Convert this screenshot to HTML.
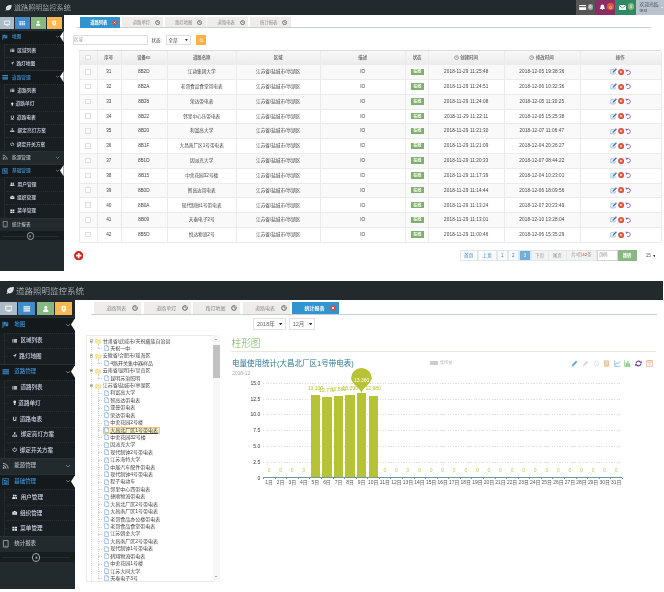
<!DOCTYPE html>
<html lang="zh-CN"><head><meta charset="utf-8"><title>道路照明监控系统</title>
<style>
html,body{margin:0;padding:0;background:#fff;}
div{box-sizing:border-box;}
body{width:664px;height:592px;position:relative;overflow:hidden;font-family:"Liberation Sans","Noto Sans CJK SC",sans-serif;color:#393939;}
.abs,.abs *{position:absolute;box-sizing:border-box;white-space:nowrap;}
.t{position:absolute;white-space:nowrap;}
#wrap{position:absolute;left:0;top:0;width:664px;height:592px;will-change:transform;}
</style></head>
<body>
<div id="wrap">
<div id="shot1"><div class="" style="position:absolute;left:0.00px;top:0.00px;width:664.00px;height:271.50px;background:#fff;"></div><div class="" style="position:absolute;left:0.00px;top:0.00px;width:664.00px;height:15.40px;background:#222a2d;"></div><svg style="position:absolute;left:5.00px;top:4.20px" width="7.00" height="7.00" viewBox="0 0 16 16"><path d="M15 2C9 2 3 3 2 9c-.3 1.6.2 2.8.8 3.6L1 14.5l1 1 2-2c1 .6 2.4.9 4 .5 6-1.4 7-7 7-12zM5 11c2-3 4-4.500 7-5.500C9 7 7 8.500 5 11z" fill="#dfe3e5"/></svg><div class="t" style="left:14.00px;top:4px;font-size:7.1px;line-height:9.94px;color:#d0d4d6;font-weight:300;">道路照明监控系统</div><div class="" style="position:absolute;left:576.20px;top:0.00px;width:19.00px;height:15.40px;background:#555;"></div><div class="" style="position:absolute;left:595.20px;top:0.00px;width:20.20px;height:15.40px;background:#892e65;"></div><div class="" style="position:absolute;left:615.40px;top:0.00px;width:20.40px;height:15.40px;background:#2e8965;"></div><div class="" style="position:absolute;left:635.80px;top:0.00px;width:28.20px;height:15.40px;background:#b9c3cf;"></div><svg style="position:absolute;left:579.30px;top:5.00px" width="7.30" height="5.20" viewBox="0 0 16 12"><path d="M0 0h16v12H0z" fill="#fff"/><path d="M0 2.500h16v2.600H0z" fill="#555"/></svg><div class="" style="position:absolute;left:587.50px;top:3.50px;width:5.80px;height:6.60px;background:#a8a8a8;border-radius:2.9px;"></div><div class="t" style="left:590.40px;top:5px;font-size:3.8px;line-height:5.32px;color:#fff;transform:translateX(-50%);">0</div><svg style="position:absolute;left:598.80px;top:4.20px" width="6.80" height="6.60" viewBox="0 0 16 16"><path d="M8 1c-3 0-4.500 2.500-4.500 5.500S2.500 11 1 12h14c-1.500-1-2.500-2.500-2.500-5.500S11 1 8 1zM6.200 13h3.600a1.800 1.800 0 0 1-3.600 0z" fill="#fff"/></svg><div class="" style="position:absolute;left:607.30px;top:3.20px;width:6.70px;height:7.30px;background:#d85b43;border-radius:3.3px;"></div><div class="t" style="left:610.70px;top:5px;font-size:3.9px;line-height:5.46px;color:#ffe;transform:translateX(-50%);">0</div><svg style="position:absolute;left:619.00px;top:5.10px" width="7.00" height="5.30" viewBox="0 0 16 12"><path d="M0 0h16v12H0z" fill="#fff"/><path d="M0 0.500l8 6.500 8-6.500" fill="none" stroke="#2e8965" stroke-width="1.600"/></svg><div class="" style="position:absolute;left:627.80px;top:3.40px;width:6.30px;height:6.90px;background:#8abb7c;border-radius:3.1px;"></div><div class="t" style="left:631.00px;top:5px;font-size:3.8px;line-height:5.32px;color:#fff;transform:translateX(-50%);">0</div><div class="t" style="left:639.50px;top:2px;font-size:4.7px;line-height:6.58px;color:#4a5560;">欢迎光临,</div><div class="t" style="left:639.50px;top:8px;font-size:4.7px;line-height:6.58px;color:#4a5560;">test</div><div style="position:absolute;left:660.9px;top:6.5px;width:0;height:0;border-left:1.6px solid transparent;border-right:1.6px solid transparent;border-top:1.8px solid #fff"></div><div class="" style="position:absolute;left:0.00px;top:15.40px;width:64.00px;height:256.10px;background:#222a2d;"></div><div class="" style="position:absolute;left:-1.00px;top:17.10px;width:14.75px;height:11.70px;background:#adbbc6;"></div><svg style="position:absolute;left:3.57px;top:19.75px" width="6.40" height="6.40" viewBox="0 0 16 16"><path d="M1.500 2.500h13v8.500h-13z" fill="none" stroke="#fff" stroke-width="2"/><path d="M5 13h6v1.500H5z" fill="#fff"/></svg><div class="" style="position:absolute;left:15.00px;top:17.10px;width:14.75px;height:11.70px;background:#428bca;"></div><svg style="position:absolute;left:19.18px;top:19.75px" width="6.40" height="6.40" viewBox="0 0 16 16"><path d="M1 3h4v2.800H1zM6 3h4v2.800H6zM11 3h4v2.800h-4zM1 6.800h4v2.800H1zM6 6.800h4v2.800H6zM11 6.800h4v2.800h-4zM1 10.600h4v2.800H1zM6 10.600h4v2.800H6zM11 10.600h4v2.800h-4z" fill="#fff"/></svg><div class="" style="position:absolute;left:31.00px;top:17.10px;width:14.75px;height:11.70px;background:#87b87f;"></div><svg style="position:absolute;left:35.17px;top:19.75px" width="6.40" height="6.40" viewBox="0 0 16 16"><circle cx="8" cy="5" r="3.200" fill="#fff"/><path d="M2.500 14.500c0-4 2-6 5.500-6s5.500 2 5.500 6z" fill="#fff"/></svg><div class="" style="position:absolute;left:47.00px;top:17.10px;width:14.75px;height:11.70px;background:#ffb752;"></div><svg style="position:absolute;left:51.17px;top:19.75px" width="6.40" height="6.40" viewBox="0 0 16 16"><path d="M3.500 2h9v7c0 3-2 4.500-4.500 5.500C5.500 13.500 3.500 12 3.500 9z" fill="#fff"/><path d="M6.500 4.500h3v5h-3z" fill="#ffb752"/></svg><div class="" style="position:absolute;left:0.00px;top:30.20px;width:64.00px;height:13.39px;background:#141a1b;border-top:0.35px solid #283135;"></div><svg style="position:absolute;left:1.60px;top:33.69px" width="6.40" height="6.40" viewBox="0 0 16 16"><path d="M2 1.500v13.500" stroke="#3f8fd2" stroke-width="1.800"/><path d="M4 3c3-1.500 5 1.500 8.500 0v7c-3.500 1.500-5.500-1.500-8.500 0z" fill="#3f8fd2" fill-opacity="0.450" stroke="#3f8fd2" stroke-width="1.300"/><path d="M4 3c1.500-.700 2.800-.400 4.200 0v3.300c-1.400-.400-2.700-.700-4.200 0zM8.200 6.300c1.400.400 2.700.700 4.300 0v3.700c-1.600.700-2.900.400-4.300 0z" fill="#3f8fd2"/></svg><div class="t" style="left:12.10px;top:34px;font-size:4.63px;line-height:6.49px;color:#3f8fd2;font-weight:500;">地图</div><svg style="position:absolute;left:55.00px;top:34.29px" width="5.20" height="5.20" viewBox="0 0 16 16"><path d="M3 5.500l5 5 5-5" fill="none" stroke="#8a949a" stroke-width="2"/></svg><svg style="position:absolute;left:59.40px;top:30.29px" width="4.60" height="13.20"><path d="M4.60 1L1 6.60L4.60 12.20z" fill="#fff"/></svg><div class="" style="position:absolute;left:0.00px;top:43.59px;width:64.00px;height:13.39px;background:#181e21;"></div><div class="" style="position:absolute;left:6.00px;top:43.59px;width:58.00px;height:0.00px;border-top:0.35px dotted #273034;"></div><div class="" style="position:absolute;left:3.70px;top:43.59px;width:0.00px;height:13.39px;border-left:0.35px solid #232b2f;"></div><div class="" style="position:absolute;left:3.70px;top:50.29px;width:2.60px;height:0.00px;border-top:0.35px solid #232b2f;"></div><svg style="position:absolute;left:10.00px;top:47.99px" width="4.60" height="4.60" viewBox="0 0 16 16"><path d="M1 3h3v2.500H1zM5.500 3H15v2.500H5.500zM1 6.800h3v2.500H1zM5.500 6.800H15v2.500H5.500zM1 10.600h3v2.500H1zM5.500 10.600H15v2.500H5.500z" fill="#dfe4ee"/></svg><div class="t" style="left:17.30px;top:48px;font-size:4.73px;line-height:6.62px;color:#cdd4e4;font-weight:500;">区域列表</div><div class="" style="position:absolute;left:0.00px;top:56.98px;width:64.00px;height:13.39px;background:#181e21;"></div><div class="" style="position:absolute;left:6.00px;top:56.98px;width:58.00px;height:0.00px;border-top:0.35px dotted #273034;"></div><div class="" style="position:absolute;left:3.70px;top:56.98px;width:0.00px;height:13.39px;border-left:0.35px solid #232b2f;"></div><div class="" style="position:absolute;left:3.70px;top:63.68px;width:2.60px;height:0.00px;border-top:0.35px solid #232b2f;"></div><svg style="position:absolute;left:10.00px;top:61.38px" width="4.60" height="4.60" viewBox="0 0 16 16"><path d="M14 2L2 8h6v6z" fill="#dfe4ee"/></svg><div class="t" style="left:16.40px;top:61px;font-size:4.73px;line-height:6.62px;color:#cdd4e4;font-weight:500;">路灯地图</div><div class="" style="position:absolute;left:0.00px;top:70.37px;width:64.00px;height:13.39px;background:#141a1b;border-top:0.35px solid #283135;"></div><svg style="position:absolute;left:1.60px;top:73.86px" width="6.40" height="6.40" viewBox="0 0 16 16"><path d="M1 2.500h14v2.600H1zM1 6.700h14v2.600H1zM1 10.900h14v2.600H1z" fill="#3f8fd2"/></svg><div class="t" style="left:12.10px;top:75px;font-size:4.63px;line-height:6.49px;color:#3f8fd2;font-weight:500;">道路管理</div><svg style="position:absolute;left:55.00px;top:74.47px" width="5.20" height="5.20" viewBox="0 0 16 16"><path d="M3 5.500l5 5 5-5" fill="none" stroke="#8a949a" stroke-width="2"/></svg><svg style="position:absolute;left:59.40px;top:70.47px" width="4.60" height="13.20"><path d="M4.60 1L1 6.60L4.60 12.20z" fill="#fff"/></svg><div class="" style="position:absolute;left:0.00px;top:83.76px;width:64.00px;height:13.39px;background:#181e21;"></div><div class="" style="position:absolute;left:6.00px;top:83.76px;width:58.00px;height:0.00px;border-top:0.35px dotted #273034;"></div><div class="" style="position:absolute;left:3.70px;top:83.76px;width:0.00px;height:13.39px;border-left:0.35px solid #232b2f;"></div><div class="" style="position:absolute;left:3.70px;top:90.46px;width:2.60px;height:0.00px;border-top:0.35px solid #232b2f;"></div><svg style="position:absolute;left:10.00px;top:88.16px" width="4.60" height="4.60" viewBox="0 0 16 16"><path d="M1 3h3v2.500H1zM5.500 3H15v2.500H5.500zM1 6.800h3v2.500H1zM5.500 6.800H15v2.500H5.500zM1 10.600h3v2.500H1zM5.500 10.600H15v2.500H5.500z" fill="#dfe4ee"/></svg><div class="t" style="left:17.30px;top:88px;font-size:4.73px;line-height:6.62px;color:#cdd4e4;font-weight:500;">道路列表</div><div class="" style="position:absolute;left:0.00px;top:97.15px;width:64.00px;height:13.39px;background:#181e21;"></div><div class="" style="position:absolute;left:6.00px;top:97.15px;width:58.00px;height:0.00px;border-top:0.35px dotted #273034;"></div><div class="" style="position:absolute;left:3.70px;top:97.15px;width:0.00px;height:13.39px;border-left:0.35px solid #232b2f;"></div><div class="" style="position:absolute;left:3.70px;top:103.84px;width:2.60px;height:0.00px;border-top:0.35px solid #232b2f;"></div><svg style="position:absolute;left:10.00px;top:101.55px" width="4.60" height="4.60" viewBox="0 0 16 16"><path d="M8 1.500a4 4 0 0 0-2.300 7.300V11h4.600V8.800A4 4 0 0 0 8 1.500zM6 12h4v2.500H6z" fill="#dfe4ee"/></svg><div class="t" style="left:15.60px;top:101px;font-size:4.73px;line-height:6.62px;color:#cdd4e4;font-weight:500;">道路单灯</div><div class="" style="position:absolute;left:0.00px;top:110.54px;width:64.00px;height:13.39px;background:#181e21;"></div><div class="" style="position:absolute;left:6.00px;top:110.54px;width:58.00px;height:0.00px;border-top:0.35px dotted #273034;"></div><div class="" style="position:absolute;left:3.70px;top:110.54px;width:0.00px;height:13.39px;border-left:0.35px solid #232b2f;"></div><div class="" style="position:absolute;left:3.70px;top:117.24px;width:2.60px;height:0.00px;border-top:0.35px solid #232b2f;"></div><svg style="position:absolute;left:10.00px;top:114.94px" width="4.60" height="4.60" viewBox="0 0 16 16"><path d="M3 2v7a5 5 0 0 0 10 0V2h-2.500v7a2.500 2.500 0 0 1-5 0V2zM2 14h12v1.500H2z" fill="#dfe4ee"/></svg><div class="t" style="left:16.80px;top:115px;font-size:4.73px;line-height:6.62px;color:#cdd4e4;font-weight:500;">道路电表</div><div class="" style="position:absolute;left:0.00px;top:123.93px;width:64.00px;height:13.39px;background:#181e21;"></div><div class="" style="position:absolute;left:6.00px;top:123.93px;width:58.00px;height:0.00px;border-top:0.35px dotted #273034;"></div><div class="" style="position:absolute;left:3.70px;top:123.93px;width:0.00px;height:13.39px;border-left:0.35px solid #232b2f;"></div><div class="" style="position:absolute;left:3.70px;top:130.62px;width:2.60px;height:0.00px;border-top:0.35px solid #232b2f;"></div><svg style="position:absolute;left:10.00px;top:128.32px" width="4.60" height="4.60" viewBox="0 0 16 16"><path d="M6 1h4v4H6zM1 10h4v4H1zM6 10h4v4H6zM11 10h4v4h-4zM7.500 5h1v3h-1zM3 7.500h10v1H3zM2.500 8h1v2h-1zM12.500 8h1v2h-1z" fill="#dfe4ee"/></svg><div class="t" style="left:17.60px;top:128px;font-size:4.73px;line-height:6.62px;color:#cdd4e4;font-weight:500;">绑定亮灯方案</div><div class="" style="position:absolute;left:0.00px;top:137.32px;width:64.00px;height:13.39px;background:#181e21;"></div><div class="" style="position:absolute;left:6.00px;top:137.32px;width:58.00px;height:0.00px;border-top:0.35px dotted #273034;"></div><div class="" style="position:absolute;left:3.70px;top:137.32px;width:0.00px;height:13.39px;border-left:0.35px solid #232b2f;"></div><div class="" style="position:absolute;left:3.70px;top:144.01px;width:2.60px;height:0.00px;border-top:0.35px solid #232b2f;"></div><svg style="position:absolute;left:10.00px;top:141.71px" width="4.60" height="4.60" viewBox="0 0 16 16"><path d="M8 1v6" stroke="#dfe4ee" stroke-width="2.200" fill="none"/><path d="M4.500 3.500a5.500 5.500 0 1 0 7 0" stroke="#dfe4ee" stroke-width="2.200" fill="none"/></svg><div class="t" style="left:16.80px;top:142px;font-size:4.73px;line-height:6.62px;color:#cdd4e4;font-weight:500;">绑定开关方案</div><div class="" style="position:absolute;left:0.00px;top:150.71px;width:64.00px;height:13.39px;background:#222a2d;border-top:0.35px solid #283135;"></div><svg style="position:absolute;left:1.60px;top:154.21px" width="6.40" height="6.40" viewBox="0 0 16 16"><circle cx="3.500" cy="12.500" r="1.800" fill="#b1bac1"/><path d="M2 7.500a6.500 6.500 0 0 1 6.500 6.500M2 3a11 11 0 0 1 11 11" stroke="#b1bac1" stroke-width="2" fill="none"/></svg><div class="t" style="left:12.10px;top:155px;font-size:4.63px;line-height:6.49px;color:#b1bac1;font-weight:500;">能源管理</div><svg style="position:absolute;left:55.00px;top:154.81px" width="5.20" height="5.20" viewBox="0 0 16 16"><path d="M3 5.500l5 5 5-5" fill="none" stroke="#8a949a" stroke-width="2"/></svg><div class="" style="position:absolute;left:0.00px;top:164.10px;width:64.00px;height:13.39px;background:#141a1b;border-top:0.35px solid #283135;"></div><svg style="position:absolute;left:1.60px;top:167.59px" width="6.40" height="6.40" viewBox="0 0 16 16"><path d="M1.500 1.500h13v13h-13z" fill="none" stroke="#3f8fd2" stroke-width="1.600"/><path d="M4 4h3.500v3.500H4zM8.500 4H12v1.500H8.500zM8.500 6.500H12V8H8.500zM4 9h8v1.300H4zM4 11.200h8v1.300H4z" fill="#3f8fd2"/></svg><div class="t" style="left:12.10px;top:168px;font-size:4.63px;line-height:6.49px;color:#3f8fd2;font-weight:500;">基础管理</div><svg style="position:absolute;left:55.00px;top:168.19px" width="5.20" height="5.20" viewBox="0 0 16 16"><path d="M3 5.500l5 5 5-5" fill="none" stroke="#8a949a" stroke-width="2"/></svg><svg style="position:absolute;left:59.40px;top:164.19px" width="4.60" height="13.20"><path d="M4.60 1L1 6.60L4.60 12.20z" fill="#fff"/></svg><div class="" style="position:absolute;left:0.00px;top:177.49px;width:64.00px;height:13.39px;background:#181e21;"></div><div class="" style="position:absolute;left:6.00px;top:177.49px;width:58.00px;height:0.00px;border-top:0.35px dotted #273034;"></div><div class="" style="position:absolute;left:3.70px;top:177.49px;width:0.00px;height:13.39px;border-left:0.35px solid #232b2f;"></div><div class="" style="position:absolute;left:3.70px;top:184.19px;width:2.60px;height:0.00px;border-top:0.35px solid #232b2f;"></div><svg style="position:absolute;left:10.00px;top:181.88px" width="4.60" height="4.60" viewBox="0 0 16 16"><circle cx="5.300" cy="4.600" r="2.800" fill="#dfe4ee"/><circle cx="11.300" cy="4.600" r="2.600" fill="#dfe4ee"/><path d="M0.500 14.500c0-4.500 1.500-6.500 4.800-6.500s4.800 2 4.800 6.500zM11 8c3 0 4.500 1.800 4.500 6.500h-4.200c0-2.800-.400-5-1.800-6.100.400-.300.900-.400 1.500-.400z" fill="#dfe4ee"/></svg><div class="t" style="left:17.60px;top:182px;font-size:4.73px;line-height:6.62px;color:#cdd4e4;font-weight:500;">用户管理</div><div class="" style="position:absolute;left:0.00px;top:190.88px;width:64.00px;height:13.39px;background:#181e21;"></div><div class="" style="position:absolute;left:6.00px;top:190.88px;width:58.00px;height:0.00px;border-top:0.35px dotted #273034;"></div><div class="" style="position:absolute;left:3.70px;top:190.88px;width:0.00px;height:13.39px;border-left:0.35px solid #232b2f;"></div><div class="" style="position:absolute;left:3.70px;top:197.57px;width:2.60px;height:0.00px;border-top:0.35px solid #232b2f;"></div><svg style="position:absolute;left:10.00px;top:195.27px" width="4.60" height="4.60" viewBox="0 0 16 16"><path d="M1 5h14v9H1zM5 3h6v2H5z" fill="#dfe4ee"/><path d="M5 8h6v1.500H5z" fill="#181e21"/></svg><div class="t" style="left:17.00px;top:195px;font-size:4.73px;line-height:6.62px;color:#cdd4e4;font-weight:500;">组织管理</div><div class="" style="position:absolute;left:0.00px;top:204.27px;width:64.00px;height:13.39px;background:#181e21;"></div><div class="" style="position:absolute;left:6.00px;top:204.27px;width:58.00px;height:0.00px;border-top:0.35px dotted #273034;"></div><div class="" style="position:absolute;left:3.70px;top:204.27px;width:0.00px;height:13.39px;border-left:0.35px solid #232b2f;"></div><div class="" style="position:absolute;left:3.70px;top:210.96px;width:2.60px;height:0.00px;border-top:0.35px solid #232b2f;"></div><svg style="position:absolute;left:10.00px;top:208.66px" width="4.60" height="4.60" viewBox="0 0 16 16"><path d="M1 2h6.300v5.300H1zM8.700 2H15v5.300H8.700zM1 8.700h6.300V14H1zM8.700 8.700H15V14H8.700z" fill="#dfe4ee"/></svg><div class="t" style="left:17.20px;top:208px;font-size:4.73px;line-height:6.62px;color:#cdd4e4;font-weight:500;">菜单管理</div><div class="" style="position:absolute;left:0.00px;top:217.66px;width:64.00px;height:13.39px;background:#222a2d;border-top:0.35px solid #283135;"></div><svg style="position:absolute;left:1.60px;top:221.16px" width="6.40" height="6.40" viewBox="0 0 16 16"><path d="M3 1h10v14H3z" fill="none" stroke="#b1bac1" stroke-width="1.600"/><path d="M6.500 12h3v1.200h-3z" fill="#b1bac1"/></svg><div class="t" style="left:12.10px;top:222px;font-size:4.63px;line-height:6.49px;color:#b1bac1;font-weight:500;">统计报表</div><div class="" style="position:absolute;left:0.00px;top:231.05px;width:64.00px;height:8.60px;background:#171c1e;"></div><div class="" style="position:absolute;left:2.00px;top:235.95px;width:57.00px;height:0.00px;border-top:0.4px solid #262e31;"></div><div class="" style="position:absolute;left:26.70px;top:232.35px;width:7.40px;height:7.40px;background:#171c1e;border:0.6px solid #a4aaad;border-radius:50%;"></div><svg style="position:absolute;left:28.20px;top:233.85px" width="4.40" height="4.40" viewBox="0 0 16 16"><path d="M10 3L5 8l5 5z" fill="#a4aaad"/><path d="M5.500 3.500v9" stroke="#a4aaad" stroke-width="1.400"/></svg><div class="" style="position:absolute;left:77.40px;top:27.30px;width:574.00px;height:0.00px;border-top:0.55px solid #c5d0dc;"></div><div class="" style="position:absolute;left:80.00px;top:17.40px;width:40.30px;height:10.30px;background:#3095cf;"></div><div class="t" style="left:98.80px;top:20px;font-size:4.3px;line-height:6.02px;color:#fff;transform:translateX(-50%);font-weight:bold;">道路列表</div><svg style="position:absolute;left:112.10px;top:20.00px" width="5.20" height="5.20" viewBox="0 0 16 16"><circle cx="8" cy="8" r="7.500" fill="#d5493b"/><path d="M5 5l6 6M11 5l-6 6" stroke="#fff" stroke-width="2.200"/></svg><div class="" style="position:absolute;left:122.20px;top:17.40px;width:41.00px;height:9.90px;background:#f0ecec;"></div><div class="t" style="left:141.40px;top:20px;font-size:4.3px;line-height:6.02px;color:#8a8a8a;transform:translateX(-50%);">道路单灯</div><svg style="position:absolute;left:154.80px;top:19.90px" width="5.20" height="5.20" viewBox="0 0 16 16"><circle cx="8" cy="8" r="6.200" fill="none" stroke="#555" stroke-width="2.400"/><path d="M8 8L12.500 3" stroke="#f0ecec" stroke-width="2"/><path d="M8 3v5h4" stroke="#555" stroke-width="1.500" fill="none"/></svg><div class="" style="position:absolute;left:164.60px;top:17.40px;width:41.00px;height:9.90px;background:#f0ecec;"></div><div class="t" style="left:183.80px;top:20px;font-size:4.3px;line-height:6.02px;color:#8a8a8a;transform:translateX(-50%);">路灯地图</div><svg style="position:absolute;left:197.20px;top:19.90px" width="5.20" height="5.20" viewBox="0 0 16 16"><circle cx="8" cy="8" r="6.200" fill="none" stroke="#555" stroke-width="2.400"/><path d="M8 8L12.500 3" stroke="#f0ecec" stroke-width="2"/><path d="M8 3v5h4" stroke="#555" stroke-width="1.500" fill="none"/></svg><div class="" style="position:absolute;left:207.00px;top:17.40px;width:41.00px;height:9.90px;background:#f0ecec;"></div><div class="t" style="left:226.20px;top:20px;font-size:4.3px;line-height:6.02px;color:#8a8a8a;transform:translateX(-50%);">道路电表</div><svg style="position:absolute;left:239.60px;top:19.90px" width="5.20" height="5.20" viewBox="0 0 16 16"><circle cx="8" cy="8" r="6.200" fill="none" stroke="#555" stroke-width="2.400"/><path d="M8 8L12.500 3" stroke="#f0ecec" stroke-width="2"/><path d="M8 3v5h4" stroke="#555" stroke-width="1.500" fill="none"/></svg><div class="" style="position:absolute;left:249.50px;top:17.40px;width:41.00px;height:9.90px;background:#f0ecec;"></div><div class="t" style="left:268.70px;top:20px;font-size:4.3px;line-height:6.02px;color:#8a8a8a;transform:translateX(-50%);">统计报表</div><svg style="position:absolute;left:282.10px;top:19.90px" width="5.20" height="5.20" viewBox="0 0 16 16"><circle cx="8" cy="8" r="6.200" fill="none" stroke="#555" stroke-width="2.400"/><path d="M8 8L12.500 3" stroke="#f0ecec" stroke-width="2"/><path d="M8 3v5h4" stroke="#555" stroke-width="1.500" fill="none"/></svg><div class="" style="position:absolute;left:73.00px;top:35.20px;width:74.50px;height:10.00px;border:0.4px solid #dedede;background:#fff;"></div><div class="t" style="left:74.20px;top:37px;font-size:4.3px;line-height:6.02px;color:#999;">区域</div><div class="t" style="left:151.50px;top:38px;font-size:4.5px;line-height:6.3px;color:#393939;">状态:</div><div class="" style="position:absolute;left:166.20px;top:35.20px;width:25.00px;height:10.00px;border:0.4px solid #dedede;background:#fff;"></div><div class="t" style="left:168.50px;top:38px;font-size:4.5px;line-height:6.3px;color:#555;">全部</div><svg style="position:absolute;left:185.3px;top:39.3px" width="2.8" height="2.4"><path d="M0 0h2.800L1.400 2.200z" fill="#333"/></svg><div class="" style="position:absolute;left:196.00px;top:35.40px;width:10.00px;height:10.00px;background:#fbb244;"></div><svg style="position:absolute;left:198.60px;top:38.00px" width="4.80" height="4.80" viewBox="0 0 16 16"><circle cx="7" cy="7" r="4.300" fill="none" stroke="#fff" stroke-width="2"/><path d="M10.500 10.500L14 14" stroke="#fff" stroke-width="2.400"/></svg><div class="" style="position:absolute;left:79.00px;top:50.50px;width:581.80px;height:13.90px;background:linear-gradient(#f8f8f8,#ececec);"></div><div class="" style="position:absolute;left:79.00px;top:64.40px;width:581.80px;height:14.80px;background:#f9f9f9;"></div><div class="" style="position:absolute;left:79.00px;top:94.00px;width:581.80px;height:14.80px;background:#f9f9f9;"></div><div class="" style="position:absolute;left:79.00px;top:123.60px;width:581.80px;height:14.80px;background:#f9f9f9;"></div><div class="" style="position:absolute;left:79.00px;top:153.20px;width:581.80px;height:14.80px;background:#f9f9f9;"></div><div class="" style="position:absolute;left:79.00px;top:182.80px;width:581.80px;height:14.80px;background:#f9f9f9;"></div><div class="" style="position:absolute;left:79.00px;top:212.40px;width:581.80px;height:14.80px;background:#f9f9f9;"></div><div class="" style="position:absolute;left:79.00px;top:64.20px;width:581.80px;height:0.00px;border-top:0.4px solid #ebebeb;"></div><div class="" style="position:absolute;left:79.00px;top:79.00px;width:581.80px;height:0.00px;border-top:0.4px solid #ebebeb;"></div><div class="" style="position:absolute;left:79.00px;top:93.80px;width:581.80px;height:0.00px;border-top:0.4px solid #ebebeb;"></div><div class="" style="position:absolute;left:79.00px;top:108.60px;width:581.80px;height:0.00px;border-top:0.4px solid #ebebeb;"></div><div class="" style="position:absolute;left:79.00px;top:123.40px;width:581.80px;height:0.00px;border-top:0.4px solid #ebebeb;"></div><div class="" style="position:absolute;left:79.00px;top:138.20px;width:581.80px;height:0.00px;border-top:0.4px solid #ebebeb;"></div><div class="" style="position:absolute;left:79.00px;top:153.00px;width:581.80px;height:0.00px;border-top:0.4px solid #ebebeb;"></div><div class="" style="position:absolute;left:79.00px;top:167.80px;width:581.80px;height:0.00px;border-top:0.4px solid #ebebeb;"></div><div class="" style="position:absolute;left:79.00px;top:182.60px;width:581.80px;height:0.00px;border-top:0.4px solid #ebebeb;"></div><div class="" style="position:absolute;left:79.00px;top:197.40px;width:581.80px;height:0.00px;border-top:0.4px solid #ebebeb;"></div><div class="" style="position:absolute;left:79.00px;top:212.20px;width:581.80px;height:0.00px;border-top:0.4px solid #ebebeb;"></div><div class="" style="position:absolute;left:79.00px;top:227.00px;width:581.80px;height:0.00px;border-top:0.4px solid #ebebeb;"></div><div class="" style="position:absolute;left:79.00px;top:241.80px;width:581.80px;height:0.00px;border-top:0.4px solid #ebebeb;"></div><div class="" style="position:absolute;left:79.00px;top:50.30px;width:581.80px;height:0.00px;border-top:0.4px solid #ddd;"></div><div class="" style="position:absolute;left:78.80px;top:50.50px;width:0.00px;height:191.50px;border-left:0.4px solid #ebebeb;"></div><div class="" style="position:absolute;left:96.55px;top:50.50px;width:0.00px;height:191.50px;border-left:0.4px solid #ebebeb;"></div><div class="" style="position:absolute;left:120.55px;top:50.50px;width:0.00px;height:191.50px;border-left:0.4px solid #ebebeb;"></div><div class="" style="position:absolute;left:166.55px;top:50.50px;width:0.00px;height:191.50px;border-left:0.4px solid #ebebeb;"></div><div class="" style="position:absolute;left:236.40px;top:50.50px;width:0.00px;height:191.50px;border-left:0.4px solid #ebebeb;"></div><div class="" style="position:absolute;left:319.60px;top:50.50px;width:0.00px;height:191.50px;border-left:0.4px solid #ebebeb;"></div><div class="" style="position:absolute;left:405.40px;top:50.50px;width:0.00px;height:191.50px;border-left:0.4px solid #ebebeb;"></div><div class="" style="position:absolute;left:428.30px;top:50.50px;width:0.00px;height:191.50px;border-left:0.4px solid #ebebeb;"></div><div class="" style="position:absolute;left:503.80px;top:50.50px;width:0.00px;height:191.50px;border-left:0.4px solid #ebebeb;"></div><div class="" style="position:absolute;left:579.50px;top:50.50px;width:0.00px;height:191.50px;border-left:0.4px solid #ebebeb;"></div><div class="" style="position:absolute;left:660.60px;top:50.50px;width:0.00px;height:191.50px;border-left:0.4px solid #ebebeb;"></div><div class="" style="position:absolute;left:84.97px;top:54.55px;width:5.80px;height:5.80px;border:0.4px solid #e0e0e0;background:#fdfdfd;"></div><div class="t" style="left:108.75px;top:55px;font-size:4.4px;line-height:6.16px;color:#707070;transform:translateX(-50%);font-weight:bold;">序号</div><div class="t" style="left:143.75px;top:55px;font-size:4.4px;line-height:6.16px;color:#707070;transform:translateX(-50%);font-weight:bold;">设备ID</div><div class="t" style="left:201.68px;top:55px;font-size:4.4px;line-height:6.16px;color:#707070;transform:translateX(-50%);font-weight:bold;">道路名称</div><div class="t" style="left:278.20px;top:55px;font-size:4.4px;line-height:6.16px;color:#707070;transform:translateX(-50%);font-weight:bold;">区域</div><div class="t" style="left:362.70px;top:55px;font-size:4.4px;line-height:6.16px;color:#707070;transform:translateX(-50%);font-weight:bold;">描述</div><div class="t" style="left:417.05px;top:55px;font-size:4.4px;line-height:6.16px;color:#707070;transform:translateX(-50%);font-weight:bold;">状态</div><div class="t" style="left:469.15px;top:55px;font-size:4.4px;line-height:6.16px;color:#707070;transform:translateX(-50%);font-weight:bold;">创建时间</div><svg style="position:absolute;left:453.85px;top:54.85px" width="5.20" height="5.20" viewBox="0 0 16 16"><circle cx="8" cy="8" r="6" fill="none" stroke="#707070" stroke-width="1.800"/><path d="M8 4.500V8h3" fill="none" stroke="#707070" stroke-width="1.500"/></svg><div class="t" style="left:544.75px;top:55px;font-size:4.4px;line-height:6.16px;color:#707070;transform:translateX(-50%);font-weight:bold;">修改时间</div><svg style="position:absolute;left:529.45px;top:54.85px" width="5.20" height="5.20" viewBox="0 0 16 16"><circle cx="8" cy="8" r="6" fill="none" stroke="#707070" stroke-width="1.800"/><path d="M8 4.500V8h3" fill="none" stroke="#707070" stroke-width="1.500"/></svg><div class="t" style="left:620.25px;top:55px;font-size:4.4px;line-height:6.16px;color:#707070;transform:translateX(-50%);font-weight:bold;">操作</div><div class="" style="position:absolute;left:84.97px;top:68.90px;width:5.80px;height:5.80px;border:0.4px solid #e0e0e0;background:#fdfdfd;"></div><div class="t" style="left:108.75px;top:69px;font-size:4.65px;line-height:6.51px;color:#444;transform:translateX(-50%);">31</div><div class="t" style="left:143.75px;top:69px;font-size:4.65px;line-height:6.51px;color:#444;transform:translateX(-50%);">8B2D</div><div class="t" style="left:201.68px;top:69px;font-size:4.65px;line-height:6.51px;color:#444;transform:translateX(-50%);">江动集团大学</div><div class="t" style="left:278.20px;top:69px;font-size:4.65px;line-height:6.51px;color:#444;transform:translateX(-50%);">江苏省/盐城市/亭湖区</div><div class="t" style="left:362.70px;top:69px;font-size:4.65px;line-height:6.51px;color:#444;transform:translateX(-50%);">IO</div><div class="" style="position:absolute;left:410.80px;top:68.60px;width:13.00px;height:6.40px;background:#82af6f;"></div><div class="t" style="left:417.30px;top:69px;font-size:4.1px;line-height:5.74px;color:#fff;transform:translateX(-50%);font-weight:bold;">在线</div><div class="t" style="left:466.25px;top:69px;font-size:4.65px;line-height:6.51px;color:#444;transform:translateX(-50%);letter-spacing:0.1px;">2018-11-29 11:25:48</div><div class="t" style="left:541.85px;top:69px;font-size:4.65px;line-height:6.51px;color:#444;transform:translateX(-50%);letter-spacing:0.1px;">2018-12-05 19:38:36</div><svg style="position:absolute;left:610.00px;top:68.40px" width="7.00" height="7.00" viewBox="0 0 16 16"><path d="M9.500 4H1.800v9.500h10V9.500" fill="none" stroke="#8db4e0" stroke-width="1.700"/><path d="M5.500 11l.8-3.200 7.200-7 2.300 2.300-7.100 7.100z" fill="#3a78c6"/></svg><svg style="position:absolute;left:618.00px;top:68.70px" width="6.20" height="6.20" viewBox="0 0 16 16"><circle cx="8" cy="8" r="7.800" fill="#d9563f"/><path d="M6 4.800v6.400L11.500 8z" fill="#fff"/></svg><svg style="position:absolute;left:625.20px;top:68.60px" width="6.40" height="6.40" viewBox="0 0 16 16"><path d="M5 4.500A5.300 5.300 0 1 1 4.500 12.800" fill="none" stroke="#8e58be" stroke-width="2.300"/><path d="M1 1.500l6.500 1.200-4 5z" fill="#8e58be"/></svg><div class="" style="position:absolute;left:84.97px;top:83.70px;width:5.80px;height:5.80px;border:0.4px solid #e0e0e0;background:#fdfdfd;"></div><div class="t" style="left:108.75px;top:84px;font-size:4.65px;line-height:6.51px;color:#444;transform:translateX(-50%);">32</div><div class="t" style="left:143.75px;top:84px;font-size:4.65px;line-height:6.51px;color:#444;transform:translateX(-50%);">8B2A</div><div class="t" style="left:201.68px;top:84px;font-size:4.65px;line-height:6.51px;color:#444;transform:translateX(-50%);">老哥食品食堂带电表</div><div class="t" style="left:278.20px;top:84px;font-size:4.65px;line-height:6.51px;color:#444;transform:translateX(-50%);">江苏省/盐城市/亭湖区</div><div class="t" style="left:362.70px;top:84px;font-size:4.65px;line-height:6.51px;color:#444;transform:translateX(-50%);">IO</div><div class="" style="position:absolute;left:410.80px;top:83.40px;width:13.00px;height:6.40px;background:#82af6f;"></div><div class="t" style="left:417.30px;top:84px;font-size:4.1px;line-height:5.74px;color:#fff;transform:translateX(-50%);font-weight:bold;">在线</div><div class="t" style="left:466.25px;top:84px;font-size:4.65px;line-height:6.51px;color:#444;transform:translateX(-50%);letter-spacing:0.1px;">2018-11-29 11:24:51</div><div class="t" style="left:541.85px;top:84px;font-size:4.65px;line-height:6.51px;color:#444;transform:translateX(-50%);letter-spacing:0.1px;">2018-12-06 10:32:36</div><svg style="position:absolute;left:610.00px;top:83.20px" width="7.00" height="7.00" viewBox="0 0 16 16"><path d="M9.500 4H1.800v9.500h10V9.500" fill="none" stroke="#8db4e0" stroke-width="1.700"/><path d="M5.500 11l.8-3.200 7.200-7 2.300 2.300-7.100 7.100z" fill="#3a78c6"/></svg><svg style="position:absolute;left:618.00px;top:83.50px" width="6.20" height="6.20" viewBox="0 0 16 16"><circle cx="8" cy="8" r="7.800" fill="#d9563f"/><path d="M6 4.800v6.400L11.500 8z" fill="#fff"/></svg><svg style="position:absolute;left:625.20px;top:83.40px" width="6.40" height="6.40" viewBox="0 0 16 16"><path d="M5 4.500A5.300 5.300 0 1 1 4.500 12.800" fill="none" stroke="#8e58be" stroke-width="2.300"/><path d="M1 1.500l6.500 1.200-4 5z" fill="#8e58be"/></svg><div class="" style="position:absolute;left:84.97px;top:98.50px;width:5.80px;height:5.80px;border:0.4px solid #e0e0e0;background:#fdfdfd;"></div><div class="t" style="left:108.75px;top:99px;font-size:4.65px;line-height:6.51px;color:#444;transform:translateX(-50%);">33</div><div class="t" style="left:143.75px;top:99px;font-size:4.65px;line-height:6.51px;color:#444;transform:translateX(-50%);">8B28</div><div class="t" style="left:201.68px;top:99px;font-size:4.65px;line-height:6.51px;color:#444;transform:translateX(-50%);">荣达带电表</div><div class="t" style="left:278.20px;top:99px;font-size:4.65px;line-height:6.51px;color:#444;transform:translateX(-50%);">江苏省/盐城市/亭湖区</div><div class="t" style="left:362.70px;top:99px;font-size:4.65px;line-height:6.51px;color:#444;transform:translateX(-50%);">IO</div><div class="" style="position:absolute;left:410.80px;top:98.20px;width:13.00px;height:6.40px;background:#82af6f;"></div><div class="t" style="left:417.30px;top:99px;font-size:4.1px;line-height:5.74px;color:#fff;transform:translateX(-50%);font-weight:bold;">在线</div><div class="t" style="left:466.25px;top:99px;font-size:4.65px;line-height:6.51px;color:#444;transform:translateX(-50%);letter-spacing:0.1px;">2018-11-29 11:24:08</div><div class="t" style="left:541.85px;top:99px;font-size:4.65px;line-height:6.51px;color:#444;transform:translateX(-50%);letter-spacing:0.1px;">2018-12-05 11:30:25</div><svg style="position:absolute;left:610.00px;top:98.00px" width="7.00" height="7.00" viewBox="0 0 16 16"><path d="M9.500 4H1.800v9.500h10V9.500" fill="none" stroke="#8db4e0" stroke-width="1.700"/><path d="M5.500 11l.8-3.200 7.200-7 2.300 2.300-7.100 7.100z" fill="#3a78c6"/></svg><svg style="position:absolute;left:618.00px;top:98.30px" width="6.20" height="6.20" viewBox="0 0 16 16"><circle cx="8" cy="8" r="7.800" fill="#d9563f"/><path d="M6 4.800v6.400L11.500 8z" fill="#fff"/></svg><svg style="position:absolute;left:625.20px;top:98.20px" width="6.40" height="6.40" viewBox="0 0 16 16"><path d="M5 4.500A5.300 5.300 0 1 1 4.500 12.800" fill="none" stroke="#8e58be" stroke-width="2.300"/><path d="M1 1.500l6.500 1.200-4 5z" fill="#8e58be"/></svg><div class="" style="position:absolute;left:84.97px;top:113.30px;width:5.80px;height:5.80px;border:0.4px solid #e0e0e0;background:#fdfdfd;"></div><div class="t" style="left:108.75px;top:114px;font-size:4.65px;line-height:6.51px;color:#444;transform:translateX(-50%);">34</div><div class="t" style="left:143.75px;top:114px;font-size:4.65px;line-height:6.51px;color:#444;transform:translateX(-50%);">8B22</div><div class="t" style="left:201.68px;top:114px;font-size:4.65px;line-height:6.51px;color:#444;transform:translateX(-50%);">邻里中心乐带电表</div><div class="t" style="left:278.20px;top:114px;font-size:4.65px;line-height:6.51px;color:#444;transform:translateX(-50%);">江苏省/盐城市/亭湖区</div><div class="t" style="left:362.70px;top:114px;font-size:4.65px;line-height:6.51px;color:#444;transform:translateX(-50%);">IO</div><div class="" style="position:absolute;left:410.80px;top:113.00px;width:13.00px;height:6.40px;background:#82af6f;"></div><div class="t" style="left:417.30px;top:114px;font-size:4.1px;line-height:5.74px;color:#fff;transform:translateX(-50%);font-weight:bold;">在线</div><div class="t" style="left:466.25px;top:114px;font-size:4.65px;line-height:6.51px;color:#444;transform:translateX(-50%);letter-spacing:0.1px;">2018-11-29 11:22:11</div><div class="t" style="left:541.85px;top:114px;font-size:4.65px;line-height:6.51px;color:#444;transform:translateX(-50%);letter-spacing:0.1px;">2018-12-05 15:25:38</div><svg style="position:absolute;left:610.00px;top:112.80px" width="7.00" height="7.00" viewBox="0 0 16 16"><path d="M9.500 4H1.800v9.500h10V9.500" fill="none" stroke="#8db4e0" stroke-width="1.700"/><path d="M5.500 11l.8-3.200 7.200-7 2.300 2.300-7.100 7.100z" fill="#3a78c6"/></svg><svg style="position:absolute;left:618.00px;top:113.10px" width="6.20" height="6.20" viewBox="0 0 16 16"><circle cx="8" cy="8" r="7.800" fill="#d9563f"/><path d="M6 4.800v6.400L11.500 8z" fill="#fff"/></svg><svg style="position:absolute;left:625.20px;top:113.00px" width="6.40" height="6.40" viewBox="0 0 16 16"><path d="M5 4.500A5.300 5.300 0 1 1 4.500 12.800" fill="none" stroke="#8e58be" stroke-width="2.300"/><path d="M1 1.500l6.500 1.200-4 5z" fill="#8e58be"/></svg><div class="" style="position:absolute;left:84.97px;top:128.10px;width:5.80px;height:5.80px;border:0.4px solid #e0e0e0;background:#fdfdfd;"></div><div class="t" style="left:108.75px;top:128px;font-size:4.65px;line-height:6.51px;color:#444;transform:translateX(-50%);">35</div><div class="t" style="left:143.75px;top:128px;font-size:4.65px;line-height:6.51px;color:#444;transform:translateX(-50%);">8B20</div><div class="t" style="left:201.68px;top:128px;font-size:4.65px;line-height:6.51px;color:#444;transform:translateX(-50%);">利富高大学</div><div class="t" style="left:278.20px;top:128px;font-size:4.65px;line-height:6.51px;color:#444;transform:translateX(-50%);">江苏省/盐城市/亭湖区</div><div class="t" style="left:362.70px;top:128px;font-size:4.65px;line-height:6.51px;color:#444;transform:translateX(-50%);">IO</div><div class="" style="position:absolute;left:410.80px;top:127.80px;width:13.00px;height:6.40px;background:#82af6f;"></div><div class="t" style="left:417.30px;top:128px;font-size:4.1px;line-height:5.74px;color:#fff;transform:translateX(-50%);font-weight:bold;">在线</div><div class="t" style="left:466.25px;top:128px;font-size:4.65px;line-height:6.51px;color:#444;transform:translateX(-50%);letter-spacing:0.1px;">2018-11-29 11:21:30</div><div class="t" style="left:541.85px;top:128px;font-size:4.65px;line-height:6.51px;color:#444;transform:translateX(-50%);letter-spacing:0.1px;">2018-12-07 11:06:47</div><svg style="position:absolute;left:610.00px;top:127.60px" width="7.00" height="7.00" viewBox="0 0 16 16"><path d="M9.500 4H1.800v9.500h10V9.500" fill="none" stroke="#8db4e0" stroke-width="1.700"/><path d="M5.500 11l.8-3.200 7.200-7 2.300 2.300-7.100 7.100z" fill="#3a78c6"/></svg><svg style="position:absolute;left:618.00px;top:127.90px" width="6.20" height="6.20" viewBox="0 0 16 16"><circle cx="8" cy="8" r="7.800" fill="#d9563f"/><path d="M6 4.800v6.400L11.500 8z" fill="#fff"/></svg><svg style="position:absolute;left:625.20px;top:127.80px" width="6.40" height="6.40" viewBox="0 0 16 16"><path d="M5 4.500A5.300 5.300 0 1 1 4.500 12.800" fill="none" stroke="#8e58be" stroke-width="2.300"/><path d="M1 1.500l6.500 1.200-4 5z" fill="#8e58be"/></svg><div class="" style="position:absolute;left:84.97px;top:142.90px;width:5.80px;height:5.80px;border:0.4px solid #e0e0e0;background:#fdfdfd;"></div><div class="t" style="left:108.75px;top:143px;font-size:4.65px;line-height:6.51px;color:#444;transform:translateX(-50%);">36</div><div class="t" style="left:143.75px;top:143px;font-size:4.65px;line-height:6.51px;color:#444;transform:translateX(-50%);">8B1F</div><div class="t" style="left:201.68px;top:143px;font-size:4.65px;line-height:6.51px;color:#444;transform:translateX(-50%);">大昌南厂区1号带电表</div><div class="t" style="left:278.20px;top:143px;font-size:4.65px;line-height:6.51px;color:#444;transform:translateX(-50%);">江苏省/盐城市/亭湖区</div><div class="t" style="left:362.70px;top:143px;font-size:4.65px;line-height:6.51px;color:#444;transform:translateX(-50%);">IO</div><div class="" style="position:absolute;left:410.80px;top:142.60px;width:13.00px;height:6.40px;background:#82af6f;"></div><div class="t" style="left:417.30px;top:143px;font-size:4.1px;line-height:5.74px;color:#fff;transform:translateX(-50%);font-weight:bold;">在线</div><div class="t" style="left:466.25px;top:143px;font-size:4.65px;line-height:6.51px;color:#444;transform:translateX(-50%);letter-spacing:0.1px;">2018-11-29 11:21:09</div><div class="t" style="left:541.85px;top:143px;font-size:4.65px;line-height:6.51px;color:#444;transform:translateX(-50%);letter-spacing:0.1px;">2018-12-04 20:26:27</div><svg style="position:absolute;left:610.00px;top:142.40px" width="7.00" height="7.00" viewBox="0 0 16 16"><path d="M9.500 4H1.800v9.500h10V9.500" fill="none" stroke="#8db4e0" stroke-width="1.700"/><path d="M5.500 11l.8-3.200 7.200-7 2.300 2.300-7.100 7.100z" fill="#3a78c6"/></svg><svg style="position:absolute;left:618.00px;top:142.70px" width="6.20" height="6.20" viewBox="0 0 16 16"><circle cx="8" cy="8" r="7.800" fill="#d9563f"/><path d="M6 4.800v6.400L11.500 8z" fill="#fff"/></svg><svg style="position:absolute;left:625.20px;top:142.60px" width="6.40" height="6.40" viewBox="0 0 16 16"><path d="M5 4.500A5.300 5.300 0 1 1 4.500 12.800" fill="none" stroke="#8e58be" stroke-width="2.300"/><path d="M1 1.500l6.500 1.200-4 5z" fill="#8e58be"/></svg><div class="" style="position:absolute;left:84.97px;top:157.70px;width:5.80px;height:5.80px;border:0.4px solid #e0e0e0;background:#fdfdfd;"></div><div class="t" style="left:108.75px;top:158px;font-size:4.65px;line-height:6.51px;color:#444;transform:translateX(-50%);">37</div><div class="t" style="left:143.75px;top:158px;font-size:4.65px;line-height:6.51px;color:#444;transform:translateX(-50%);">8B1D</div><div class="t" style="left:201.68px;top:158px;font-size:4.65px;line-height:6.51px;color:#444;transform:translateX(-50%);">因派克大学</div><div class="t" style="left:278.20px;top:158px;font-size:4.65px;line-height:6.51px;color:#444;transform:translateX(-50%);">江苏省/盐城市/亭湖区</div><div class="t" style="left:362.70px;top:158px;font-size:4.65px;line-height:6.51px;color:#444;transform:translateX(-50%);">IO</div><div class="" style="position:absolute;left:410.80px;top:157.40px;width:13.00px;height:6.40px;background:#82af6f;"></div><div class="t" style="left:417.30px;top:158px;font-size:4.1px;line-height:5.74px;color:#fff;transform:translateX(-50%);font-weight:bold;">在线</div><div class="t" style="left:466.25px;top:158px;font-size:4.65px;line-height:6.51px;color:#444;transform:translateX(-50%);letter-spacing:0.1px;">2018-11-29 11:20:33</div><div class="t" style="left:541.85px;top:158px;font-size:4.65px;line-height:6.51px;color:#444;transform:translateX(-50%);letter-spacing:0.1px;">2018-12-07 08:44:22</div><svg style="position:absolute;left:610.00px;top:157.20px" width="7.00" height="7.00" viewBox="0 0 16 16"><path d="M9.500 4H1.800v9.500h10V9.500" fill="none" stroke="#8db4e0" stroke-width="1.700"/><path d="M5.500 11l.8-3.200 7.200-7 2.300 2.300-7.100 7.100z" fill="#3a78c6"/></svg><svg style="position:absolute;left:618.00px;top:157.50px" width="6.20" height="6.20" viewBox="0 0 16 16"><circle cx="8" cy="8" r="7.800" fill="#d9563f"/><path d="M6 4.800v6.400L11.500 8z" fill="#fff"/></svg><svg style="position:absolute;left:625.20px;top:157.40px" width="6.40" height="6.40" viewBox="0 0 16 16"><path d="M5 4.500A5.300 5.300 0 1 1 4.500 12.800" fill="none" stroke="#8e58be" stroke-width="2.300"/><path d="M1 1.500l6.500 1.200-4 5z" fill="#8e58be"/></svg><div class="" style="position:absolute;left:84.97px;top:172.50px;width:5.80px;height:5.80px;border:0.4px solid #e0e0e0;background:#fdfdfd;"></div><div class="t" style="left:108.75px;top:173px;font-size:4.65px;line-height:6.51px;color:#444;transform:translateX(-50%);">38</div><div class="t" style="left:143.75px;top:173px;font-size:4.65px;line-height:6.51px;color:#444;transform:translateX(-50%);">8B15</div><div class="t" style="left:201.68px;top:173px;font-size:4.65px;line-height:6.51px;color:#444;transform:translateX(-50%);">中舍花园32号楼</div><div class="t" style="left:278.20px;top:173px;font-size:4.65px;line-height:6.51px;color:#444;transform:translateX(-50%);">江苏省/盐城市/亭湖区</div><div class="t" style="left:362.70px;top:173px;font-size:4.65px;line-height:6.51px;color:#444;transform:translateX(-50%);">IO</div><div class="" style="position:absolute;left:410.80px;top:172.20px;width:13.00px;height:6.40px;background:#82af6f;"></div><div class="t" style="left:417.30px;top:173px;font-size:4.1px;line-height:5.74px;color:#fff;transform:translateX(-50%);font-weight:bold;">在线</div><div class="t" style="left:466.25px;top:173px;font-size:4.65px;line-height:6.51px;color:#444;transform:translateX(-50%);letter-spacing:0.1px;">2018-11-29 11:17:39</div><div class="t" style="left:541.85px;top:173px;font-size:4.65px;line-height:6.51px;color:#444;transform:translateX(-50%);letter-spacing:0.1px;">2018-12-04 10:23:01</div><svg style="position:absolute;left:610.00px;top:172.00px" width="7.00" height="7.00" viewBox="0 0 16 16"><path d="M9.500 4H1.800v9.500h10V9.500" fill="none" stroke="#8db4e0" stroke-width="1.700"/><path d="M5.500 11l.8-3.200 7.200-7 2.300 2.300-7.100 7.100z" fill="#3a78c6"/></svg><svg style="position:absolute;left:618.00px;top:172.30px" width="6.20" height="6.20" viewBox="0 0 16 16"><circle cx="8" cy="8" r="7.800" fill="#d9563f"/><path d="M6 4.800v6.400L11.500 8z" fill="#fff"/></svg><svg style="position:absolute;left:625.20px;top:172.20px" width="6.40" height="6.40" viewBox="0 0 16 16"><path d="M5 4.500A5.300 5.300 0 1 1 4.500 12.800" fill="none" stroke="#8e58be" stroke-width="2.300"/><path d="M1 1.500l6.500 1.200-4 5z" fill="#8e58be"/></svg><div class="" style="position:absolute;left:84.97px;top:187.30px;width:5.80px;height:5.80px;border:0.4px solid #e0e0e0;background:#fdfdfd;"></div><div class="t" style="left:108.75px;top:188px;font-size:4.65px;line-height:6.51px;color:#444;transform:translateX(-50%);">39</div><div class="t" style="left:143.75px;top:188px;font-size:4.65px;line-height:6.51px;color:#444;transform:translateX(-50%);">8B0D</div><div class="t" style="left:201.68px;top:188px;font-size:4.65px;line-height:6.51px;color:#444;transform:translateX(-50%);">智高达带电表</div><div class="t" style="left:278.20px;top:188px;font-size:4.65px;line-height:6.51px;color:#444;transform:translateX(-50%);">江苏省/盐城市/亭湖区</div><div class="t" style="left:362.70px;top:188px;font-size:4.65px;line-height:6.51px;color:#444;transform:translateX(-50%);">IO</div><div class="" style="position:absolute;left:410.80px;top:187.00px;width:13.00px;height:6.40px;background:#82af6f;"></div><div class="t" style="left:417.30px;top:188px;font-size:4.1px;line-height:5.74px;color:#fff;transform:translateX(-50%);font-weight:bold;">在线</div><div class="t" style="left:466.25px;top:188px;font-size:4.65px;line-height:6.51px;color:#444;transform:translateX(-50%);letter-spacing:0.1px;">2018-11-29 11:14:44</div><div class="t" style="left:541.85px;top:188px;font-size:4.65px;line-height:6.51px;color:#444;transform:translateX(-50%);letter-spacing:0.1px;">2018-12-06 18:09:56</div><svg style="position:absolute;left:610.00px;top:186.80px" width="7.00" height="7.00" viewBox="0 0 16 16"><path d="M9.500 4H1.800v9.500h10V9.500" fill="none" stroke="#8db4e0" stroke-width="1.700"/><path d="M5.500 11l.8-3.200 7.200-7 2.300 2.300-7.100 7.100z" fill="#3a78c6"/></svg><svg style="position:absolute;left:618.00px;top:187.10px" width="6.20" height="6.20" viewBox="0 0 16 16"><circle cx="8" cy="8" r="7.800" fill="#d9563f"/><path d="M6 4.800v6.400L11.500 8z" fill="#fff"/></svg><svg style="position:absolute;left:625.20px;top:187.00px" width="6.40" height="6.40" viewBox="0 0 16 16"><path d="M5 4.500A5.300 5.300 0 1 1 4.500 12.800" fill="none" stroke="#8e58be" stroke-width="2.300"/><path d="M1 1.500l6.500 1.200-4 5z" fill="#8e58be"/></svg><div class="" style="position:absolute;left:84.97px;top:202.10px;width:5.80px;height:5.80px;border:0.4px solid #e0e0e0;background:#fdfdfd;"></div><div class="t" style="left:108.75px;top:203px;font-size:4.65px;line-height:6.51px;color:#444;transform:translateX(-50%);">40</div><div class="t" style="left:143.75px;top:203px;font-size:4.65px;line-height:6.51px;color:#444;transform:translateX(-50%);">8B0A</div><div class="t" style="left:201.68px;top:203px;font-size:4.65px;line-height:6.51px;color:#444;transform:translateX(-50%);">现代制钟1号带电表</div><div class="t" style="left:278.20px;top:203px;font-size:4.65px;line-height:6.51px;color:#444;transform:translateX(-50%);">江苏省/盐城市/亭湖区</div><div class="t" style="left:362.70px;top:203px;font-size:4.65px;line-height:6.51px;color:#444;transform:translateX(-50%);">IO</div><div class="" style="position:absolute;left:410.80px;top:201.80px;width:13.00px;height:6.40px;background:#82af6f;"></div><div class="t" style="left:417.30px;top:203px;font-size:4.1px;line-height:5.74px;color:#fff;transform:translateX(-50%);font-weight:bold;">在线</div><div class="t" style="left:466.25px;top:203px;font-size:4.65px;line-height:6.51px;color:#444;transform:translateX(-50%);letter-spacing:0.1px;">2018-11-29 11:13:24</div><div class="t" style="left:541.85px;top:203px;font-size:4.65px;line-height:6.51px;color:#444;transform:translateX(-50%);letter-spacing:0.1px;">2018-12-07 20:23:49</div><svg style="position:absolute;left:610.00px;top:201.60px" width="7.00" height="7.00" viewBox="0 0 16 16"><path d="M9.500 4H1.800v9.500h10V9.500" fill="none" stroke="#8db4e0" stroke-width="1.700"/><path d="M5.500 11l.8-3.200 7.200-7 2.300 2.300-7.100 7.100z" fill="#3a78c6"/></svg><svg style="position:absolute;left:618.00px;top:201.90px" width="6.20" height="6.20" viewBox="0 0 16 16"><circle cx="8" cy="8" r="7.800" fill="#d9563f"/><path d="M6 4.800v6.400L11.500 8z" fill="#fff"/></svg><svg style="position:absolute;left:625.20px;top:201.80px" width="6.40" height="6.40" viewBox="0 0 16 16"><path d="M5 4.500A5.300 5.300 0 1 1 4.500 12.800" fill="none" stroke="#8e58be" stroke-width="2.300"/><path d="M1 1.500l6.500 1.200-4 5z" fill="#8e58be"/></svg><div class="" style="position:absolute;left:84.97px;top:216.90px;width:5.80px;height:5.80px;border:0.4px solid #e0e0e0;background:#fdfdfd;"></div><div class="t" style="left:108.75px;top:217px;font-size:4.65px;line-height:6.51px;color:#444;transform:translateX(-50%);">41</div><div class="t" style="left:143.75px;top:217px;font-size:4.65px;line-height:6.51px;color:#444;transform:translateX(-50%);">8B09</div><div class="t" style="left:201.68px;top:217px;font-size:4.65px;line-height:6.51px;color:#444;transform:translateX(-50%);">天泰电子3号</div><div class="t" style="left:278.20px;top:217px;font-size:4.65px;line-height:6.51px;color:#444;transform:translateX(-50%);">江苏省/盐城市/亭湖区</div><div class="t" style="left:362.70px;top:217px;font-size:4.65px;line-height:6.51px;color:#444;transform:translateX(-50%);">IO</div><div class="" style="position:absolute;left:410.80px;top:216.60px;width:13.00px;height:6.40px;background:#82af6f;"></div><div class="t" style="left:417.30px;top:217px;font-size:4.1px;line-height:5.74px;color:#fff;transform:translateX(-50%);font-weight:bold;">在线</div><div class="t" style="left:466.25px;top:217px;font-size:4.65px;line-height:6.51px;color:#444;transform:translateX(-50%);letter-spacing:0.1px;">2018-11-29 11:13:01</div><div class="t" style="left:541.85px;top:217px;font-size:4.65px;line-height:6.51px;color:#444;transform:translateX(-50%);letter-spacing:0.1px;">2018-12-10 13:28:04</div><svg style="position:absolute;left:610.00px;top:216.40px" width="7.00" height="7.00" viewBox="0 0 16 16"><path d="M9.500 4H1.800v9.500h10V9.500" fill="none" stroke="#8db4e0" stroke-width="1.700"/><path d="M5.500 11l.8-3.200 7.200-7 2.300 2.300-7.100 7.100z" fill="#3a78c6"/></svg><svg style="position:absolute;left:618.00px;top:216.70px" width="6.20" height="6.20" viewBox="0 0 16 16"><circle cx="8" cy="8" r="7.800" fill="#d9563f"/><path d="M6 4.800v6.400L11.500 8z" fill="#fff"/></svg><svg style="position:absolute;left:625.20px;top:216.60px" width="6.40" height="6.40" viewBox="0 0 16 16"><path d="M5 4.500A5.300 5.300 0 1 1 4.500 12.800" fill="none" stroke="#8e58be" stroke-width="2.300"/><path d="M1 1.500l6.500 1.200-4 5z" fill="#8e58be"/></svg><div class="" style="position:absolute;left:84.97px;top:231.70px;width:5.80px;height:5.80px;border:0.4px solid #e0e0e0;background:#fdfdfd;"></div><div class="t" style="left:108.75px;top:232px;font-size:4.65px;line-height:6.51px;color:#444;transform:translateX(-50%);">42</div><div class="t" style="left:143.75px;top:232px;font-size:4.65px;line-height:6.51px;color:#444;transform:translateX(-50%);">8B5D</div><div class="t" style="left:201.68px;top:232px;font-size:4.65px;line-height:6.51px;color:#444;transform:translateX(-50%);">悦达物流2号</div><div class="t" style="left:278.20px;top:232px;font-size:4.65px;line-height:6.51px;color:#444;transform:translateX(-50%);">江苏省/盐城市/亭湖区</div><div class="t" style="left:362.70px;top:232px;font-size:4.65px;line-height:6.51px;color:#444;transform:translateX(-50%);">IO</div><div class="" style="position:absolute;left:410.80px;top:231.40px;width:13.00px;height:6.40px;background:#82af6f;"></div><div class="t" style="left:417.30px;top:232px;font-size:4.1px;line-height:5.74px;color:#fff;transform:translateX(-50%);font-weight:bold;">在线</div><div class="t" style="left:466.25px;top:232px;font-size:4.65px;line-height:6.51px;color:#444;transform:translateX(-50%);letter-spacing:0.1px;">2018-11-29 11:00:46</div><div class="t" style="left:541.85px;top:232px;font-size:4.65px;line-height:6.51px;color:#444;transform:translateX(-50%);letter-spacing:0.1px;">2018-12-06 15:35:29</div><svg style="position:absolute;left:610.00px;top:231.20px" width="7.00" height="7.00" viewBox="0 0 16 16"><path d="M9.500 4H1.800v9.500h10V9.500" fill="none" stroke="#8db4e0" stroke-width="1.700"/><path d="M5.500 11l.8-3.200 7.200-7 2.300 2.300-7.100 7.100z" fill="#3a78c6"/></svg><svg style="position:absolute;left:618.00px;top:231.50px" width="6.20" height="6.20" viewBox="0 0 16 16"><circle cx="8" cy="8" r="7.800" fill="#d9563f"/><path d="M6 4.800v6.400L11.500 8z" fill="#fff"/></svg><svg style="position:absolute;left:625.20px;top:231.40px" width="6.40" height="6.40" viewBox="0 0 16 16"><path d="M5 4.500A5.300 5.300 0 1 1 4.500 12.800" fill="none" stroke="#8e58be" stroke-width="2.300"/><path d="M1 1.500l6.500 1.200-4 5z" fill="#8e58be"/></svg><svg style="position:absolute;left:73.70px;top:250.60px" width="9.40" height="9.40" viewBox="0 0 16 16"><circle cx="8" cy="8" r="8" fill="#d12723"/><path d="M8 3.500v9M3.500 8h9" stroke="#fff" stroke-width="3"/></svg><div class="" style="position:absolute;left:459.70px;top:250.20px;width:18.40px;height:10.50px;background:#fafafa;border:0.4px solid #e0e8eb;"></div><div class="t" style="left:468.70px;top:253px;font-size:4.6px;line-height:6.44px;color:#2283c5;transform:translateX(-50%);">首页</div><div class="" style="position:absolute;left:477.70px;top:250.20px;width:19.40px;height:10.50px;background:#fafafa;border:0.4px solid #e0e8eb;"></div><div class="t" style="left:487.20px;top:253px;font-size:4.6px;line-height:6.44px;color:#2283c5;transform:translateX(-50%);">上页</div><div class="" style="position:absolute;left:496.70px;top:250.20px;width:11.50px;height:10.50px;background:#fafafa;border:0.4px solid #e0e8eb;"></div><div class="t" style="left:502.25px;top:253px;font-size:4.6px;line-height:6.44px;color:#2283c5;transform:translateX(-50%);">1</div><div class="" style="position:absolute;left:507.80px;top:250.20px;width:11.40px;height:10.50px;background:#fafafa;border:0.4px solid #e0e8eb;"></div><div class="t" style="left:513.30px;top:253px;font-size:4.6px;line-height:6.44px;color:#2283c5;transform:translateX(-50%);">2</div><div class="" style="position:absolute;left:518.80px;top:250.20px;width:12.40px;height:10.50px;background:#6faed9;border:0.4px solid #e0e8eb;"></div><div class="t" style="left:524.80px;top:253px;font-size:4.6px;line-height:6.44px;color:#fff;transform:translateX(-50%);">3</div><div class="" style="position:absolute;left:530.80px;top:250.20px;width:17.80px;height:10.50px;background:#f2f2f2;border:0.4px solid #e0e8eb;"></div><div class="t" style="left:539.50px;top:253px;font-size:4.6px;line-height:6.44px;color:#999;transform:translateX(-50%);">下页</div><div class="" style="position:absolute;left:548.20px;top:250.20px;width:18.50px;height:10.50px;background:#f2f2f2;border:0.4px solid #e0e8eb;"></div><div class="t" style="left:557.25px;top:253px;font-size:4.6px;line-height:6.44px;color:#999;transform:translateX(-50%);">尾页</div><div class="" style="position:absolute;left:566.30px;top:250.20px;width:30.40px;height:10.50px;background:#f2f2f2;border:0.4px solid #e0e8eb;"></div><div class="t" style="left:581.30px;top:252px;font-size:4.4px;line-height:6.16px;color:#999;transform:translateX(-50%);">共3页<span style="color:#e33">42</span>条</div><div class="" style="position:absolute;left:596.50px;top:250.20px;width:21.00px;height:10.50px;background:#fff;border:0.4px solid #d5d5d5;"></div><div class="t" style="left:599.00px;top:252px;font-size:4.3px;line-height:6.02px;color:#888;">页码</div><div class="" style="position:absolute;left:617.50px;top:250.20px;width:19.00px;height:10.50px;background:#87b87f;"></div><div class="t" style="left:627.00px;top:253px;font-size:4.3px;line-height:6.02px;color:#fff;transform:translateX(-50%);font-weight:bold;">跳转</div><div class="t" style="left:645.80px;top:253px;font-size:4.6px;line-height:6.44px;color:#555;">15</div><svg style="position:absolute;left:652.6px;top:254.5px" width="2.8" height="2.4"><path d="M0 0h2.800L1.400 2.200z" fill="#333"/></svg></div>
<div id="shot2"><div class="" style="position:absolute;left:0.00px;top:281.00px;width:663.20px;height:308.20px;background:#fff;"></div><div class="" style="position:absolute;left:0.00px;top:281.00px;width:663.20px;height:19.10px;background:#222a2d;"></div><svg style="position:absolute;left:6.00px;top:286.20px" width="8.40" height="8.40" viewBox="0 0 16 16"><path d="M15 2C9 2 3 3 2 9c-.3 1.6.2 2.8.8 3.6L1 14.5l1 1 2-2c1 .6 2.4.9 4 .5 6-1.4 7-7 7-12zM5 11c2-3 4-4.500 7-5.500C9 7 7 8.500 5 11z" fill="#dfe3e5"/></svg><div class="t" style="left:16.10px;top:286px;font-size:8.5px;line-height:11.9px;color:#d0d4d6;font-weight:300;">道路照明监控系统</div><div class="" style="position:absolute;left:0.00px;top:300.10px;width:75.10px;height:289.10px;background:#222a2d;"></div><div class="" style="position:absolute;left:-0.20px;top:301.90px;width:17.10px;height:13.20px;background:#adbbc6;"></div><svg style="position:absolute;left:4.55px;top:304.70px" width="7.60" height="7.60" viewBox="0 0 16 16"><path d="M1.500 2.500h13v8.500h-13z" fill="none" stroke="#fff" stroke-width="2"/><path d="M5 13h6v1.500H5z" fill="#fff"/></svg><div class="" style="position:absolute;left:18.30px;top:301.90px;width:17.10px;height:13.20px;background:#428bca;"></div><svg style="position:absolute;left:23.05px;top:304.70px" width="7.60" height="7.60" viewBox="0 0 16 16"><path d="M1 2.500h14v2.600H1zM1 6.700h14v2.600H1zM1 10.900h14v2.600H1z" fill="#fff"/></svg><div class="" style="position:absolute;left:36.80px;top:301.90px;width:17.10px;height:13.20px;background:#87b87f;"></div><svg style="position:absolute;left:41.55px;top:304.70px" width="7.60" height="7.60" viewBox="0 0 16 16"><circle cx="8" cy="5" r="3.200" fill="#fff"/><path d="M2.500 14.500c0-4 2-6 5.500-6s5.500 2 5.500 6z" fill="#fff"/></svg><div class="" style="position:absolute;left:55.30px;top:301.90px;width:17.10px;height:13.20px;background:#ffb752;"></div><svg style="position:absolute;left:60.05px;top:304.70px" width="7.60" height="7.60" viewBox="0 0 16 16"><path d="M3.500 2h9v7c0 3-2 4.500-4.500 5.500C5.500 13.500 3.500 12 3.500 9z" fill="#fff"/><path d="M6.500 4.500h3v5h-3z" fill="#ffb752"/></svg><div class="" style="position:absolute;left:0.00px;top:317.00px;width:75.10px;height:15.65px;background:#141a1b;border-top:0.41px solid #283135;"></div><svg style="position:absolute;left:1.88px;top:321.06px" width="7.54" height="7.54" viewBox="0 0 16 16"><path d="M2 1.500v13.500" stroke="#3f8fd2" stroke-width="1.800"/><path d="M4 3c3-1.500 5 1.500 8.500 0v7c-3.500 1.500-5.500-1.500-8.500 0z" fill="#3f8fd2" fill-opacity="0.450" stroke="#3f8fd2" stroke-width="1.300"/><path d="M4 3c1.500-.700 2.800-.400 4.200 0v3.300c-1.400-.400-2.700-.700-4.200 0zM8.200 6.300c1.400.400 2.700.700 4.300 0v3.700c-1.600.700-2.900.400-4.300 0z" fill="#3f8fd2"/></svg><div class="t" style="left:14.25px;top:321px;font-size:5.46px;line-height:7.64px;color:#3f8fd2;font-weight:500;">地图</div><svg style="position:absolute;left:64.50px;top:321.76px" width="6.12" height="6.12" viewBox="0 0 16 16"><path d="M3 5.500l5 5 5-5" fill="none" stroke="#8a949a" stroke-width="2"/></svg><svg style="position:absolute;left:69.86px;top:317.23px" width="5.24" height="15.19"><path d="M5.24 1L1 7.60L5.24 14.19z" fill="#fff"/></svg><div class="" style="position:absolute;left:0.00px;top:332.65px;width:75.10px;height:15.65px;background:#181e21;"></div><div class="" style="position:absolute;left:7.07px;top:332.65px;width:68.03px;height:0.00px;border-top:0.41px dotted #273034;"></div><div class="" style="position:absolute;left:4.36px;top:332.65px;width:0.00px;height:15.65px;border-left:0.41px solid #232b2f;"></div><div class="" style="position:absolute;left:4.36px;top:340.47px;width:3.06px;height:0.00px;border-top:0.41px solid #232b2f;"></div><svg style="position:absolute;left:11.78px;top:337.77px" width="5.42" height="5.42" viewBox="0 0 16 16"><path d="M1 3h3v2.500H1zM5.500 3H15v2.500H5.500zM1 6.800h3v2.500H1zM5.500 6.800H15v2.500H5.500zM1 10.600h3v2.500H1zM5.500 10.600H15v2.500H5.500z" fill="#dfe4ee"/></svg><div class="t" style="left:20.38px;top:337px;font-size:5.57px;line-height:7.79px;color:#cdd4e4;font-weight:500;">区域列表</div><div class="" style="position:absolute;left:0.00px;top:348.30px;width:75.10px;height:15.65px;background:#181e21;"></div><div class="" style="position:absolute;left:7.07px;top:348.30px;width:68.03px;height:0.00px;border-top:0.41px dotted #273034;"></div><div class="" style="position:absolute;left:4.36px;top:348.30px;width:0.00px;height:15.65px;border-left:0.41px solid #232b2f;"></div><div class="" style="position:absolute;left:4.36px;top:356.12px;width:3.06px;height:0.00px;border-top:0.41px solid #232b2f;"></div><svg style="position:absolute;left:11.78px;top:353.42px" width="5.42" height="5.42" viewBox="0 0 16 16"><path d="M14 2L2 8h6v6z" fill="#dfe4ee"/></svg><div class="t" style="left:19.32px;top:353px;font-size:5.57px;line-height:7.79px;color:#cdd4e4;font-weight:500;">路灯地图</div><div class="" style="position:absolute;left:0.00px;top:363.95px;width:75.10px;height:15.65px;background:#141a1b;border-top:0.41px solid #283135;"></div><svg style="position:absolute;left:1.88px;top:368.01px" width="7.54" height="7.54" viewBox="0 0 16 16"><path d="M1 2.500h14v2.600H1zM1 6.700h14v2.600H1zM1 10.900h14v2.600H1z" fill="#3f8fd2"/></svg><div class="t" style="left:14.25px;top:368px;font-size:5.46px;line-height:7.64px;color:#3f8fd2;font-weight:500;">道路管理</div><svg style="position:absolute;left:64.50px;top:368.71px" width="6.12" height="6.12" viewBox="0 0 16 16"><path d="M3 5.500l5 5 5-5" fill="none" stroke="#8a949a" stroke-width="2"/></svg><svg style="position:absolute;left:69.86px;top:364.18px" width="5.24" height="15.19"><path d="M5.24 1L1 7.60L5.24 14.19z" fill="#fff"/></svg><div class="" style="position:absolute;left:0.00px;top:379.60px;width:75.10px;height:15.65px;background:#181e21;"></div><div class="" style="position:absolute;left:7.07px;top:379.60px;width:68.03px;height:0.00px;border-top:0.41px dotted #273034;"></div><div class="" style="position:absolute;left:4.36px;top:379.60px;width:0.00px;height:15.65px;border-left:0.41px solid #232b2f;"></div><div class="" style="position:absolute;left:4.36px;top:387.43px;width:3.06px;height:0.00px;border-top:0.41px solid #232b2f;"></div><svg style="position:absolute;left:11.78px;top:384.72px" width="5.42" height="5.42" viewBox="0 0 16 16"><path d="M1 3h3v2.500H1zM5.500 3H15v2.500H5.500zM1 6.800h3v2.500H1zM5.500 6.800H15v2.500H5.500zM1 10.600h3v2.500H1zM5.500 10.600H15v2.500H5.500z" fill="#dfe4ee"/></svg><div class="t" style="left:20.38px;top:384px;font-size:5.57px;line-height:7.79px;color:#cdd4e4;font-weight:500;">道路列表</div><div class="" style="position:absolute;left:0.00px;top:395.25px;width:75.10px;height:15.65px;background:#181e21;"></div><div class="" style="position:absolute;left:7.07px;top:395.25px;width:68.03px;height:0.00px;border-top:0.41px dotted #273034;"></div><div class="" style="position:absolute;left:4.36px;top:395.25px;width:0.00px;height:15.65px;border-left:0.41px solid #232b2f;"></div><div class="" style="position:absolute;left:4.36px;top:403.07px;width:3.06px;height:0.00px;border-top:0.41px solid #232b2f;"></div><svg style="position:absolute;left:11.78px;top:400.37px" width="5.42" height="5.42" viewBox="0 0 16 16"><path d="M8 1.500a4 4 0 0 0-2.300 7.300V11h4.600V8.800A4 4 0 0 0 8 1.500zM6 12h4v2.500H6z" fill="#dfe4ee"/></svg><div class="t" style="left:18.37px;top:400px;font-size:5.57px;line-height:7.79px;color:#cdd4e4;font-weight:500;">道路单灯</div><div class="" style="position:absolute;left:0.00px;top:410.90px;width:75.10px;height:15.65px;background:#181e21;"></div><div class="" style="position:absolute;left:7.07px;top:410.90px;width:68.03px;height:0.00px;border-top:0.41px dotted #273034;"></div><div class="" style="position:absolute;left:4.36px;top:410.90px;width:0.00px;height:15.65px;border-left:0.41px solid #232b2f;"></div><div class="" style="position:absolute;left:4.36px;top:418.72px;width:3.06px;height:0.00px;border-top:0.41px solid #232b2f;"></div><svg style="position:absolute;left:11.78px;top:416.02px" width="5.42" height="5.42" viewBox="0 0 16 16"><path d="M3 2v7a5 5 0 0 0 10 0V2h-2.500v7a2.500 2.500 0 0 1-5 0V2zM2 14h12v1.500H2z" fill="#dfe4ee"/></svg><div class="t" style="left:19.79px;top:416px;font-size:5.57px;line-height:7.79px;color:#cdd4e4;font-weight:500;">道路电表</div><div class="" style="position:absolute;left:0.00px;top:426.55px;width:75.10px;height:15.65px;background:#181e21;"></div><div class="" style="position:absolute;left:7.07px;top:426.55px;width:68.03px;height:0.00px;border-top:0.41px dotted #273034;"></div><div class="" style="position:absolute;left:4.36px;top:426.55px;width:0.00px;height:15.65px;border-left:0.41px solid #232b2f;"></div><div class="" style="position:absolute;left:4.36px;top:434.38px;width:3.06px;height:0.00px;border-top:0.41px solid #232b2f;"></div><svg style="position:absolute;left:11.78px;top:431.67px" width="5.42" height="5.42" viewBox="0 0 16 16"><path d="M6 1h4v4H6zM1 10h4v4H1zM6 10h4v4H6zM11 10h4v4h-4zM7.500 5h1v3h-1zM3 7.500h10v1H3zM2.500 8h1v2h-1zM12.500 8h1v2h-1z" fill="#dfe4ee"/></svg><div class="t" style="left:20.73px;top:431px;font-size:5.57px;line-height:7.79px;color:#cdd4e4;font-weight:500;">绑定亮灯方案</div><div class="" style="position:absolute;left:0.00px;top:442.20px;width:75.10px;height:15.65px;background:#181e21;"></div><div class="" style="position:absolute;left:7.07px;top:442.20px;width:68.03px;height:0.00px;border-top:0.41px dotted #273034;"></div><div class="" style="position:absolute;left:4.36px;top:442.20px;width:0.00px;height:15.65px;border-left:0.41px solid #232b2f;"></div><div class="" style="position:absolute;left:4.36px;top:450.02px;width:3.06px;height:0.00px;border-top:0.41px solid #232b2f;"></div><svg style="position:absolute;left:11.78px;top:447.32px" width="5.42" height="5.42" viewBox="0 0 16 16"><path d="M8 1v6" stroke="#dfe4ee" stroke-width="2.200" fill="none"/><path d="M4.500 3.500a5.500 5.500 0 1 0 7 0" stroke="#dfe4ee" stroke-width="2.200" fill="none"/></svg><div class="t" style="left:19.79px;top:447px;font-size:5.57px;line-height:7.79px;color:#cdd4e4;font-weight:500;">绑定开关方案</div><div class="" style="position:absolute;left:0.00px;top:457.85px;width:75.10px;height:15.65px;background:#222a2d;border-top:0.41px solid #283135;"></div><svg style="position:absolute;left:1.88px;top:461.91px" width="7.54" height="7.54" viewBox="0 0 16 16"><circle cx="3.500" cy="12.500" r="1.800" fill="#b1bac1"/><path d="M2 7.500a6.500 6.500 0 0 1 6.500 6.500M2 3a11 11 0 0 1 11 11" stroke="#b1bac1" stroke-width="2" fill="none"/></svg><div class="t" style="left:14.25px;top:462px;font-size:5.46px;line-height:7.64px;color:#b1bac1;font-weight:500;">能源管理</div><svg style="position:absolute;left:64.50px;top:462.61px" width="6.12" height="6.12" viewBox="0 0 16 16"><path d="M3 5.500l5 5 5-5" fill="none" stroke="#8a949a" stroke-width="2"/></svg><div class="" style="position:absolute;left:0.00px;top:473.50px;width:75.10px;height:15.65px;background:#141a1b;border-top:0.41px solid #283135;"></div><svg style="position:absolute;left:1.88px;top:477.56px" width="7.54" height="7.54" viewBox="0 0 16 16"><path d="M1.500 1.500h13v13h-13z" fill="none" stroke="#3f8fd2" stroke-width="1.600"/><path d="M4 4h3.500v3.500H4zM8.500 4H12v1.500H8.500zM8.500 6.500H12V8H8.500zM4 9h8v1.300H4zM4 11.200h8v1.300H4z" fill="#3f8fd2"/></svg><div class="t" style="left:14.25px;top:478px;font-size:5.46px;line-height:7.64px;color:#3f8fd2;font-weight:500;">基础管理</div><svg style="position:absolute;left:64.50px;top:478.26px" width="6.12" height="6.12" viewBox="0 0 16 16"><path d="M3 5.500l5 5 5-5" fill="none" stroke="#8a949a" stroke-width="2"/></svg><svg style="position:absolute;left:69.86px;top:473.73px" width="5.24" height="15.19"><path d="M5.24 1L1 7.60L5.24 14.19z" fill="#fff"/></svg><div class="" style="position:absolute;left:0.00px;top:489.15px;width:75.10px;height:15.65px;background:#181e21;"></div><div class="" style="position:absolute;left:7.07px;top:489.15px;width:68.03px;height:0.00px;border-top:0.41px dotted #273034;"></div><div class="" style="position:absolute;left:4.36px;top:489.15px;width:0.00px;height:15.65px;border-left:0.41px solid #232b2f;"></div><div class="" style="position:absolute;left:4.36px;top:496.97px;width:3.06px;height:0.00px;border-top:0.41px solid #232b2f;"></div><svg style="position:absolute;left:11.78px;top:494.27px" width="5.42" height="5.42" viewBox="0 0 16 16"><circle cx="5.300" cy="4.600" r="2.800" fill="#dfe4ee"/><circle cx="11.300" cy="4.600" r="2.600" fill="#dfe4ee"/><path d="M0.500 14.500c0-4.500 1.500-6.500 4.800-6.500s4.800 2 4.800 6.500zM11 8c3 0 4.500 1.800 4.500 6.500h-4.200c0-2.800-.400-5-1.800-6.100.400-.300.900-.400 1.500-.400z" fill="#dfe4ee"/></svg><div class="t" style="left:20.73px;top:494px;font-size:5.57px;line-height:7.79px;color:#cdd4e4;font-weight:500;">用户管理</div><div class="" style="position:absolute;left:0.00px;top:504.80px;width:75.10px;height:15.65px;background:#181e21;"></div><div class="" style="position:absolute;left:7.07px;top:504.80px;width:68.03px;height:0.00px;border-top:0.41px dotted #273034;"></div><div class="" style="position:absolute;left:4.36px;top:504.80px;width:0.00px;height:15.65px;border-left:0.41px solid #232b2f;"></div><div class="" style="position:absolute;left:4.36px;top:512.62px;width:3.06px;height:0.00px;border-top:0.41px solid #232b2f;"></div><svg style="position:absolute;left:11.78px;top:509.92px" width="5.42" height="5.42" viewBox="0 0 16 16"><path d="M1 5h14v9H1zM5 3h6v2H5z" fill="#dfe4ee"/><path d="M5 8h6v1.500H5z" fill="#181e21"/></svg><div class="t" style="left:20.02px;top:510px;font-size:5.57px;line-height:7.79px;color:#cdd4e4;font-weight:500;">组织管理</div><div class="" style="position:absolute;left:0.00px;top:520.45px;width:75.10px;height:15.65px;background:#181e21;"></div><div class="" style="position:absolute;left:7.07px;top:520.45px;width:68.03px;height:0.00px;border-top:0.41px dotted #273034;"></div><div class="" style="position:absolute;left:4.36px;top:520.45px;width:0.00px;height:15.65px;border-left:0.41px solid #232b2f;"></div><div class="" style="position:absolute;left:4.36px;top:528.28px;width:3.06px;height:0.00px;border-top:0.41px solid #232b2f;"></div><svg style="position:absolute;left:11.78px;top:525.57px" width="5.42" height="5.42" viewBox="0 0 16 16"><path d="M1 2h6.300v5.300H1zM8.700 2H15v5.300H8.700zM1 8.700h6.300V14H1zM8.700 8.700H15V14H8.700z" fill="#dfe4ee"/></svg><div class="t" style="left:20.26px;top:525px;font-size:5.57px;line-height:7.79px;color:#cdd4e4;font-weight:500;">菜单管理</div><div class="" style="position:absolute;left:0.00px;top:536.10px;width:75.10px;height:15.65px;background:#222a2d;border-top:0.41px solid #283135;"></div><svg style="position:absolute;left:1.88px;top:540.16px" width="7.54" height="7.54" viewBox="0 0 16 16"><path d="M3 1h10v14H3z" fill="none" stroke="#b1bac1" stroke-width="1.600"/><path d="M6.500 12h3v1.200h-3z" fill="#b1bac1"/></svg><div class="t" style="left:14.25px;top:540px;font-size:5.46px;line-height:7.64px;color:#b1bac1;font-weight:500;">统计报表</div><div class="" style="position:absolute;left:0.00px;top:551.75px;width:75.10px;height:10.30px;background:#171c1e;"></div><div class="" style="position:absolute;left:3.00px;top:557.15px;width:66.00px;height:0.00px;border-top:0.5px solid #262e31;"></div><div class="" style="position:absolute;left:31.90px;top:553.15px;width:8.40px;height:8.40px;background:#171c1e;border:0.6px solid #a4aaad;border-radius:50%;"></div><svg style="position:absolute;left:33.50px;top:554.75px" width="5.20" height="5.20" viewBox="0 0 16 16"><path d="M10 3L5 8l5 5z" fill="#a4aaad"/><path d="M5.500 3.500v9" stroke="#a4aaad" stroke-width="1.400"/></svg><div class="" style="position:absolute;left:91.00px;top:314.10px;width:565.50px;height:0.00px;border-top:0.65px solid #c5d0dc;"></div><div class="" style="position:absolute;left:93.80px;top:302.30px;width:47.20px;height:11.60px;background:#f0ecec;"></div><div class="t" style="left:116.20px;top:305px;font-size:5.0px;line-height:7.0px;color:#8a8a8a;transform:translateX(-50%);">道路列表</div><svg style="position:absolute;left:131.70px;top:305.10px" width="6.00" height="6.00" viewBox="0 0 16 16"><circle cx="8" cy="8" r="6.200" fill="none" stroke="#555" stroke-width="2.400"/><path d="M8 8L12.500 3" stroke="#f0ecec" stroke-width="2"/><path d="M8 3v5h4" stroke="#555" stroke-width="1.500" fill="none"/></svg><div class="" style="position:absolute;left:143.80px;top:302.30px;width:47.20px;height:11.60px;background:#f0ecec;"></div><div class="t" style="left:166.20px;top:305px;font-size:5.0px;line-height:7.0px;color:#8a8a8a;transform:translateX(-50%);">道路单灯</div><svg style="position:absolute;left:181.70px;top:305.10px" width="6.00" height="6.00" viewBox="0 0 16 16"><circle cx="8" cy="8" r="6.200" fill="none" stroke="#555" stroke-width="2.400"/><path d="M8 8L12.500 3" stroke="#f0ecec" stroke-width="2"/><path d="M8 3v5h4" stroke="#555" stroke-width="1.500" fill="none"/></svg><div class="" style="position:absolute;left:193.20px;top:302.30px;width:47.20px;height:11.60px;background:#f0ecec;"></div><div class="t" style="left:215.60px;top:305px;font-size:5.0px;line-height:7.0px;color:#8a8a8a;transform:translateX(-50%);">路灯地图</div><svg style="position:absolute;left:231.10px;top:305.10px" width="6.00" height="6.00" viewBox="0 0 16 16"><circle cx="8" cy="8" r="6.200" fill="none" stroke="#555" stroke-width="2.400"/><path d="M8 8L12.500 3" stroke="#f0ecec" stroke-width="2"/><path d="M8 3v5h4" stroke="#555" stroke-width="1.500" fill="none"/></svg><div class="" style="position:absolute;left:242.60px;top:302.30px;width:47.20px;height:11.60px;background:#f0ecec;"></div><div class="t" style="left:265.00px;top:305px;font-size:5.0px;line-height:7.0px;color:#8a8a8a;transform:translateX(-50%);">道路电表</div><svg style="position:absolute;left:280.50px;top:305.10px" width="6.00" height="6.00" viewBox="0 0 16 16"><circle cx="8" cy="8" r="6.200" fill="none" stroke="#555" stroke-width="2.400"/><path d="M8 8L12.500 3" stroke="#f0ecec" stroke-width="2"/><path d="M8 3v5h4" stroke="#555" stroke-width="1.500" fill="none"/></svg><div class="" style="position:absolute;left:292.20px;top:302.30px;width:47.20px;height:11.90px;background:#3095cf;"></div><div class="t" style="left:314.60px;top:305px;font-size:5.0px;line-height:7.0px;color:#fff;transform:translateX(-50%);font-weight:bold;">统计报表</div><svg style="position:absolute;left:329.80px;top:305.20px" width="6.00" height="6.00" viewBox="0 0 16 16"><circle cx="8" cy="8" r="7.500" fill="#d5493b"/><path d="M5 5l6 6M11 5l-6 6" stroke="#fff" stroke-width="2.200"/></svg><div class="" style="position:absolute;left:253.10px;top:317.80px;width:32.70px;height:12.00px;border:0.5px solid #e2e2e2;background:#fff;"></div><div class="t" style="left:257.00px;top:321px;font-size:5.5px;line-height:7.7px;color:#666;">2018年</div><svg style="position:absolute;left:279.10px;top:322.6px" width="3.2" height="2.8"><path d="M0 0h3.200L1.600 2.600z" fill="#333"/></svg><div class="" style="position:absolute;left:288.80px;top:317.80px;width:26.50px;height:12.00px;border:0.5px solid #e2e2e2;background:#fff;"></div><div class="t" style="left:292.70px;top:321px;font-size:5.5px;line-height:7.7px;color:#666;">12月</div><svg style="position:absolute;left:308.60px;top:322.6px" width="3.2" height="2.8"><path d="M0 0h3.200L1.600 2.600z" fill="#333"/></svg><div class="" style="position:absolute;left:85.50px;top:334.70px;width:134.90px;height:247.40px;border:0.5px solid #ebebeb;background:#fff;"></div><div class="" style="position:absolute;left:212.60px;top:335.20px;width:7.00px;height:246.40px;background:#f7f7f7;"></div><div class="" style="position:absolute;left:212.60px;top:344.60px;width:7.00px;height:33.60px;background:#c1c1c1;"></div><div style="position:absolute;left:214.6px;top:339px;width:0;height:0;border-left:1.5px solid transparent;border-right:1.5px solid transparent;border-bottom:1.9px solid #555"></div><div style="position:absolute;left:214.6px;top:575.6px;width:0;height:0;border-left:1.5px solid transparent;border-right:1.5px solid transparent;border-top:1.9px solid #555"></div><div class="" style="position:absolute;left:91.10px;top:341.00px;width:0.00px;height:240.60px;border-left:0.4px dotted #d8d8d8;"></div><div class="" style="position:absolute;left:89.60px;top:339.30px;width:3.40px;height:3.40px;border:0.4px solid #c4c4c4;background:#f6f6f6;"></div><div class="" style="position:absolute;left:90.40px;top:340.60px;width:1.80px;height:0.80px;background:#999;"></div><svg style="position:absolute;left:95.40px;top:338.00px" width="6.60" height="6.00" viewBox="0 0 16 16"><path d="M1 3h5l1.500 2H15v9H1z" fill="#f9eba5" stroke="#e2c96e" stroke-width="1.200"/></svg><div class="t" style="left:102.70px;top:338px;font-size:5.0px;line-height:7.0px;color:#444;">甘肃省/武威市/天祝藏族自治县</div><div class="" style="position:absolute;left:98.20px;top:348.42px;width:3.60px;height:0.00px;border-top:0.4px dotted #d0d0d0;"></div><svg style="position:absolute;left:103.50px;top:345.32px" width="5.40" height="6.20" viewBox="0 0 16 16"><path d="M2 1h8l4 4v10H2z" fill="#fff" stroke="#5b8fd0" stroke-width="1.600"/><path d="M10 1v4h4" fill="#cfe0f5" stroke="#5b8fd0" stroke-width="1.200"/></svg><div class="t" style="left:110.20px;top:345px;font-size:5.0px;line-height:7.0px;color:#444;">天祝一中</div><div class="" style="position:absolute;left:89.60px;top:354.14px;width:3.40px;height:3.40px;border:0.4px solid #c4c4c4;background:#f6f6f6;"></div><div class="" style="position:absolute;left:90.40px;top:355.44px;width:1.80px;height:0.80px;background:#999;"></div><svg style="position:absolute;left:95.40px;top:352.84px" width="6.60" height="6.00" viewBox="0 0 16 16"><path d="M1 3h5l1.500 2H15v9H1z" fill="#f9eba5" stroke="#e2c96e" stroke-width="1.200"/></svg><div class="t" style="left:102.70px;top:352px;font-size:5.0px;line-height:7.0px;color:#444;">安徽省/合肥市/瑶海区</div><div class="" style="position:absolute;left:98.20px;top:363.26px;width:3.60px;height:0.00px;border-top:0.4px dotted #d0d0d0;"></div><svg style="position:absolute;left:103.50px;top:360.16px" width="5.40" height="6.20" viewBox="0 0 16 16"><path d="M2 1h8l4 4v10H2z" fill="#fff" stroke="#5b8fd0" stroke-width="1.600"/><path d="M10 1v4h4" fill="#cfe0f5" stroke="#5b8fd0" stroke-width="1.200"/></svg><div class="t" style="left:110.20px;top:360px;font-size:5.0px;line-height:7.0px;color:#444;">4路开关集中器样品</div><div class="" style="position:absolute;left:89.60px;top:368.98px;width:3.40px;height:3.40px;border:0.4px solid #c4c4c4;background:#f6f6f6;"></div><div class="" style="position:absolute;left:90.40px;top:370.28px;width:1.80px;height:0.80px;background:#999;"></div><svg style="position:absolute;left:95.40px;top:367.68px" width="6.60" height="6.00" viewBox="0 0 16 16"><path d="M1 3h5l1.500 2H15v9H1z" fill="#f9eba5" stroke="#e2c96e" stroke-width="1.200"/></svg><div class="t" style="left:102.70px;top:367px;font-size:5.0px;line-height:7.0px;color:#444;">云南省/昆明市/呈贡区</div><div class="" style="position:absolute;left:98.20px;top:378.10px;width:3.60px;height:0.00px;border-top:0.4px dotted #d0d0d0;"></div><svg style="position:absolute;left:103.50px;top:375.00px" width="5.40" height="6.20" viewBox="0 0 16 16"><path d="M2 1h8l4 4v10H2z" fill="#fff" stroke="#5b8fd0" stroke-width="1.600"/><path d="M10 1v4h4" fill="#cfe0f5" stroke="#5b8fd0" stroke-width="1.200"/></svg><div class="t" style="left:110.20px;top:375px;font-size:5.0px;line-height:7.0px;color:#444;">昆明苏治照明</div><div class="" style="position:absolute;left:89.60px;top:383.82px;width:3.40px;height:3.40px;border:0.4px solid #c4c4c4;background:#f6f6f6;"></div><div class="" style="position:absolute;left:90.40px;top:385.12px;width:1.80px;height:0.80px;background:#999;"></div><svg style="position:absolute;left:95.40px;top:382.52px" width="6.60" height="6.00" viewBox="0 0 16 16"><path d="M1 3h5l1.500 2H15v9H1z" fill="#f9eba5" stroke="#e2c96e" stroke-width="1.200"/></svg><div class="t" style="left:102.70px;top:382px;font-size:5.0px;line-height:7.0px;color:#444;">江苏省/盐城市/亭湖区</div><div class="" style="position:absolute;left:98.20px;top:392.94px;width:3.60px;height:0.00px;border-top:0.4px dotted #d0d0d0;"></div><svg style="position:absolute;left:103.50px;top:389.84px" width="5.40" height="6.20" viewBox="0 0 16 16"><path d="M2 1h8l4 4v10H2z" fill="#fff" stroke="#5b8fd0" stroke-width="1.600"/><path d="M10 1v4h4" fill="#cfe0f5" stroke="#5b8fd0" stroke-width="1.200"/></svg><div class="t" style="left:110.20px;top:389px;font-size:5.0px;line-height:7.0px;color:#444;">利富高大学</div><div class="" style="position:absolute;left:98.20px;top:400.36px;width:3.60px;height:0.00px;border-top:0.4px dotted #d0d0d0;"></div><svg style="position:absolute;left:103.50px;top:397.26px" width="5.40" height="6.20" viewBox="0 0 16 16"><path d="M2 1h8l4 4v10H2z" fill="#fff" stroke="#5b8fd0" stroke-width="1.600"/><path d="M10 1v4h4" fill="#cfe0f5" stroke="#5b8fd0" stroke-width="1.200"/></svg><div class="t" style="left:110.20px;top:397px;font-size:5.0px;line-height:7.0px;color:#444;">智高达带电表</div><div class="" style="position:absolute;left:98.20px;top:407.78px;width:3.60px;height:0.00px;border-top:0.4px dotted #d0d0d0;"></div><svg style="position:absolute;left:103.50px;top:404.68px" width="5.40" height="6.20" viewBox="0 0 16 16"><path d="M2 1h8l4 4v10H2z" fill="#fff" stroke="#5b8fd0" stroke-width="1.600"/><path d="M10 1v4h4" fill="#cfe0f5" stroke="#5b8fd0" stroke-width="1.200"/></svg><div class="t" style="left:110.20px;top:404px;font-size:5.0px;line-height:7.0px;color:#444;">亚曼带电表</div><div class="" style="position:absolute;left:98.20px;top:415.20px;width:3.60px;height:0.00px;border-top:0.4px dotted #d0d0d0;"></div><svg style="position:absolute;left:103.50px;top:412.10px" width="5.40" height="6.20" viewBox="0 0 16 16"><path d="M2 1h8l4 4v10H2z" fill="#fff" stroke="#5b8fd0" stroke-width="1.600"/><path d="M10 1v4h4" fill="#cfe0f5" stroke="#5b8fd0" stroke-width="1.200"/></svg><div class="t" style="left:110.20px;top:412px;font-size:5.0px;line-height:7.0px;color:#444;">荣达带电表</div><div class="" style="position:absolute;left:98.20px;top:422.62px;width:3.60px;height:0.00px;border-top:0.4px dotted #d0d0d0;"></div><svg style="position:absolute;left:103.50px;top:419.52px" width="5.40" height="6.20" viewBox="0 0 16 16"><path d="M2 1h8l4 4v10H2z" fill="#fff" stroke="#5b8fd0" stroke-width="1.600"/><path d="M10 1v4h4" fill="#cfe0f5" stroke="#5b8fd0" stroke-width="1.200"/></svg><div class="t" style="left:110.20px;top:419px;font-size:5.0px;line-height:7.0px;color:#444;">中舍花园2号楼</div><div class="" style="position:absolute;left:98.20px;top:430.04px;width:3.60px;height:0.00px;border-top:0.4px dotted #d0d0d0;"></div><div class="" style="position:absolute;left:102.80px;top:426.54px;width:57.60px;height:7.00px;background:#fdf1c8;border:0.4px solid #f3c577;"></div><svg style="position:absolute;left:103.50px;top:426.94px" width="5.40" height="6.20" viewBox="0 0 16 16"><path d="M2 1h8l4 4v10H2z" fill="#fff" stroke="#5b8fd0" stroke-width="1.600"/><path d="M10 1v4h4" fill="#cfe0f5" stroke="#5b8fd0" stroke-width="1.200"/></svg><div class="t" style="left:110.20px;top:427px;font-size:5.0px;line-height:7.0px;color:#444;text-decoration:underline;">大昌北厂区1号带电表</div><div class="" style="position:absolute;left:98.20px;top:437.46px;width:3.60px;height:0.00px;border-top:0.4px dotted #d0d0d0;"></div><svg style="position:absolute;left:103.50px;top:434.36px" width="5.40" height="6.20" viewBox="0 0 16 16"><path d="M2 1h8l4 4v10H2z" fill="#fff" stroke="#5b8fd0" stroke-width="1.600"/><path d="M10 1v4h4" fill="#cfe0f5" stroke="#5b8fd0" stroke-width="1.200"/></svg><div class="t" style="left:110.20px;top:434px;font-size:5.0px;line-height:7.0px;color:#444;">中舍花园32号楼</div><div class="" style="position:absolute;left:98.20px;top:444.88px;width:3.60px;height:0.00px;border-top:0.4px dotted #d0d0d0;"></div><svg style="position:absolute;left:103.50px;top:441.78px" width="5.40" height="6.20" viewBox="0 0 16 16"><path d="M2 1h8l4 4v10H2z" fill="#fff" stroke="#5b8fd0" stroke-width="1.600"/><path d="M10 1v4h4" fill="#cfe0f5" stroke="#5b8fd0" stroke-width="1.200"/></svg><div class="t" style="left:110.20px;top:441px;font-size:5.0px;line-height:7.0px;color:#444;">因派克大学</div><div class="" style="position:absolute;left:98.20px;top:452.30px;width:3.60px;height:0.00px;border-top:0.4px dotted #d0d0d0;"></div><svg style="position:absolute;left:103.50px;top:449.20px" width="5.40" height="6.20" viewBox="0 0 16 16"><path d="M2 1h8l4 4v10H2z" fill="#fff" stroke="#5b8fd0" stroke-width="1.600"/><path d="M10 1v4h4" fill="#cfe0f5" stroke="#5b8fd0" stroke-width="1.200"/></svg><div class="t" style="left:110.20px;top:449px;font-size:5.0px;line-height:7.0px;color:#444;">现代制钟2号带电表</div><div class="" style="position:absolute;left:98.20px;top:459.72px;width:3.60px;height:0.00px;border-top:0.4px dotted #d0d0d0;"></div><svg style="position:absolute;left:103.50px;top:456.62px" width="5.40" height="6.20" viewBox="0 0 16 16"><path d="M2 1h8l4 4v10H2z" fill="#fff" stroke="#5b8fd0" stroke-width="1.600"/><path d="M10 1v4h4" fill="#cfe0f5" stroke="#5b8fd0" stroke-width="1.200"/></svg><div class="t" style="left:110.20px;top:456px;font-size:5.0px;line-height:7.0px;color:#444;">江苏海特大学</div><div class="" style="position:absolute;left:98.20px;top:467.14px;width:3.60px;height:0.00px;border-top:0.4px dotted #d0d0d0;"></div><svg style="position:absolute;left:103.50px;top:464.04px" width="5.40" height="6.20" viewBox="0 0 16 16"><path d="M2 1h8l4 4v10H2z" fill="#fff" stroke="#5b8fd0" stroke-width="1.600"/><path d="M10 1v4h4" fill="#cfe0f5" stroke="#5b8fd0" stroke-width="1.200"/></svg><div class="t" style="left:110.20px;top:464px;font-size:5.0px;line-height:7.0px;color:#444;">中展汽车配件带电表</div><div class="" style="position:absolute;left:98.20px;top:474.56px;width:3.60px;height:0.00px;border-top:0.4px dotted #d0d0d0;"></div><svg style="position:absolute;left:103.50px;top:471.46px" width="5.40" height="6.20" viewBox="0 0 16 16"><path d="M2 1h8l4 4v10H2z" fill="#fff" stroke="#5b8fd0" stroke-width="1.600"/><path d="M10 1v4h4" fill="#cfe0f5" stroke="#5b8fd0" stroke-width="1.200"/></svg><div class="t" style="left:110.20px;top:471px;font-size:5.0px;line-height:7.0px;color:#444;">现代制钟4号带电表</div><div class="" style="position:absolute;left:98.20px;top:481.98px;width:3.60px;height:0.00px;border-top:0.4px dotted #d0d0d0;"></div><svg style="position:absolute;left:103.50px;top:478.88px" width="5.40" height="6.20" viewBox="0 0 16 16"><path d="M2 1h8l4 4v10H2z" fill="#fff" stroke="#5b8fd0" stroke-width="1.600"/><path d="M10 1v4h4" fill="#cfe0f5" stroke="#5b8fd0" stroke-width="1.200"/></svg><div class="t" style="left:110.20px;top:478px;font-size:5.0px;line-height:7.0px;color:#444;">程子电动车</div><div class="" style="position:absolute;left:98.20px;top:489.40px;width:3.60px;height:0.00px;border-top:0.4px dotted #d0d0d0;"></div><svg style="position:absolute;left:103.50px;top:486.30px" width="5.40" height="6.20" viewBox="0 0 16 16"><path d="M2 1h8l4 4v10H2z" fill="#fff" stroke="#5b8fd0" stroke-width="1.600"/><path d="M10 1v4h4" fill="#cfe0f5" stroke="#5b8fd0" stroke-width="1.200"/></svg><div class="t" style="left:110.20px;top:486px;font-size:5.0px;line-height:7.0px;color:#444;">邻里中心西带电表</div><div class="" style="position:absolute;left:98.20px;top:496.82px;width:3.60px;height:0.00px;border-top:0.4px dotted #d0d0d0;"></div><svg style="position:absolute;left:103.50px;top:493.72px" width="5.40" height="6.20" viewBox="0 0 16 16"><path d="M2 1h8l4 4v10H2z" fill="#fff" stroke="#5b8fd0" stroke-width="1.600"/><path d="M10 1v4h4" fill="#cfe0f5" stroke="#5b8fd0" stroke-width="1.200"/></svg><div class="t" style="left:110.20px;top:493px;font-size:5.0px;line-height:7.0px;color:#444;">捷顺物流带电表</div><div class="" style="position:absolute;left:98.20px;top:504.24px;width:3.60px;height:0.00px;border-top:0.4px dotted #d0d0d0;"></div><svg style="position:absolute;left:103.50px;top:501.14px" width="5.40" height="6.20" viewBox="0 0 16 16"><path d="M2 1h8l4 4v10H2z" fill="#fff" stroke="#5b8fd0" stroke-width="1.600"/><path d="M10 1v4h4" fill="#cfe0f5" stroke="#5b8fd0" stroke-width="1.200"/></svg><div class="t" style="left:110.20px;top:501px;font-size:5.0px;line-height:7.0px;color:#444;">大昌北厂区2号带电表</div><div class="" style="position:absolute;left:98.20px;top:511.66px;width:3.60px;height:0.00px;border-top:0.4px dotted #d0d0d0;"></div><svg style="position:absolute;left:103.50px;top:508.56px" width="5.40" height="6.20" viewBox="0 0 16 16"><path d="M2 1h8l4 4v10H2z" fill="#fff" stroke="#5b8fd0" stroke-width="1.600"/><path d="M10 1v4h4" fill="#cfe0f5" stroke="#5b8fd0" stroke-width="1.200"/></svg><div class="t" style="left:110.20px;top:508px;font-size:5.0px;line-height:7.0px;color:#444;">大昌南厂区1号带电表</div><div class="" style="position:absolute;left:98.20px;top:519.08px;width:3.60px;height:0.00px;border-top:0.4px dotted #d0d0d0;"></div><svg style="position:absolute;left:103.50px;top:515.98px" width="5.40" height="6.20" viewBox="0 0 16 16"><path d="M2 1h8l4 4v10H2z" fill="#fff" stroke="#5b8fd0" stroke-width="1.600"/><path d="M10 1v4h4" fill="#cfe0f5" stroke="#5b8fd0" stroke-width="1.200"/></svg><div class="t" style="left:110.20px;top:516px;font-size:5.0px;line-height:7.0px;color:#444;">老哥食品办公楼带电表</div><div class="" style="position:absolute;left:98.20px;top:526.50px;width:3.60px;height:0.00px;border-top:0.4px dotted #d0d0d0;"></div><svg style="position:absolute;left:103.50px;top:523.40px" width="5.40" height="6.20" viewBox="0 0 16 16"><path d="M2 1h8l4 4v10H2z" fill="#fff" stroke="#5b8fd0" stroke-width="1.600"/><path d="M10 1v4h4" fill="#cfe0f5" stroke="#5b8fd0" stroke-width="1.200"/></svg><div class="t" style="left:110.20px;top:523px;font-size:5.0px;line-height:7.0px;color:#444;">老哥食品食堂带电表</div><div class="" style="position:absolute;left:98.20px;top:533.92px;width:3.60px;height:0.00px;border-top:0.4px dotted #d0d0d0;"></div><svg style="position:absolute;left:103.50px;top:530.82px" width="5.40" height="6.20" viewBox="0 0 16 16"><path d="M2 1h8l4 4v10H2z" fill="#fff" stroke="#5b8fd0" stroke-width="1.600"/><path d="M10 1v4h4" fill="#cfe0f5" stroke="#5b8fd0" stroke-width="1.200"/></svg><div class="t" style="left:110.20px;top:530px;font-size:5.0px;line-height:7.0px;color:#444;">江苏朝金大学</div><div class="" style="position:absolute;left:98.20px;top:541.34px;width:3.60px;height:0.00px;border-top:0.4px dotted #d0d0d0;"></div><svg style="position:absolute;left:103.50px;top:538.24px" width="5.40" height="6.20" viewBox="0 0 16 16"><path d="M2 1h8l4 4v10H2z" fill="#fff" stroke="#5b8fd0" stroke-width="1.600"/><path d="M10 1v4h4" fill="#cfe0f5" stroke="#5b8fd0" stroke-width="1.200"/></svg><div class="t" style="left:110.20px;top:538px;font-size:5.0px;line-height:7.0px;color:#444;">大昌南厂区2号带电表</div><div class="" style="position:absolute;left:98.20px;top:548.76px;width:3.60px;height:0.00px;border-top:0.4px dotted #d0d0d0;"></div><svg style="position:absolute;left:103.50px;top:545.66px" width="5.40" height="6.20" viewBox="0 0 16 16"><path d="M2 1h8l4 4v10H2z" fill="#fff" stroke="#5b8fd0" stroke-width="1.600"/><path d="M10 1v4h4" fill="#cfe0f5" stroke="#5b8fd0" stroke-width="1.200"/></svg><div class="t" style="left:110.20px;top:545px;font-size:5.0px;line-height:7.0px;color:#444;">现代制钟1号带电表</div><div class="" style="position:absolute;left:98.20px;top:556.18px;width:3.60px;height:0.00px;border-top:0.4px dotted #d0d0d0;"></div><svg style="position:absolute;left:103.50px;top:553.08px" width="5.40" height="6.20" viewBox="0 0 16 16"><path d="M2 1h8l4 4v10H2z" fill="#fff" stroke="#5b8fd0" stroke-width="1.600"/><path d="M10 1v4h4" fill="#cfe0f5" stroke="#5b8fd0" stroke-width="1.200"/></svg><div class="t" style="left:110.20px;top:553px;font-size:5.0px;line-height:7.0px;color:#444;">鹤翔物流带电表</div><div class="" style="position:absolute;left:98.20px;top:563.60px;width:3.60px;height:0.00px;border-top:0.4px dotted #d0d0d0;"></div><svg style="position:absolute;left:103.50px;top:560.50px" width="5.40" height="6.20" viewBox="0 0 16 16"><path d="M2 1h8l4 4v10H2z" fill="#fff" stroke="#5b8fd0" stroke-width="1.600"/><path d="M10 1v4h4" fill="#cfe0f5" stroke="#5b8fd0" stroke-width="1.200"/></svg><div class="t" style="left:110.20px;top:560px;font-size:5.0px;line-height:7.0px;color:#444;">中舍花园1号楼</div><div class="" style="position:absolute;left:98.20px;top:571.02px;width:3.60px;height:0.00px;border-top:0.4px dotted #d0d0d0;"></div><svg style="position:absolute;left:103.50px;top:567.92px" width="5.40" height="6.20" viewBox="0 0 16 16"><path d="M2 1h8l4 4v10H2z" fill="#fff" stroke="#5b8fd0" stroke-width="1.600"/><path d="M10 1v4h4" fill="#cfe0f5" stroke="#5b8fd0" stroke-width="1.200"/></svg><div class="t" style="left:110.20px;top:568px;font-size:5.0px;line-height:7.0px;color:#444;">江苏大同大学</div><div class="" style="position:absolute;left:98.20px;top:578.44px;width:3.60px;height:0.00px;border-top:0.4px dotted #d0d0d0;"></div><svg style="position:absolute;left:103.50px;top:575.34px" width="5.40" height="6.20" viewBox="0 0 16 16"><path d="M2 1h8l4 4v10H2z" fill="#fff" stroke="#5b8fd0" stroke-width="1.600"/><path d="M10 1v4h4" fill="#cfe0f5" stroke="#5b8fd0" stroke-width="1.200"/></svg><div class="t" style="left:110.20px;top:575px;font-size:5.0px;line-height:7.0px;color:#444;">天泰电子3号</div><div class="" style="position:absolute;left:98.20px;top:344.00px;width:0.00px;height:4.42px;border-left:0.4px dotted #d0d0d0;"></div><div class="" style="position:absolute;left:98.20px;top:358.84px;width:0.00px;height:4.42px;border-left:0.4px dotted #d0d0d0;"></div><div class="" style="position:absolute;left:98.20px;top:373.68px;width:0.00px;height:4.42px;border-left:0.4px dotted #d0d0d0;"></div><div class="" style="position:absolute;left:98.20px;top:388.52px;width:0.00px;height:189.92px;border-left:0.4px dotted #d0d0d0;"></div><div class="t" style="left:231.50px;top:337px;font-size:9.7px;line-height:13.58px;color:#74ae54;font-weight:300;">柱形图</div><div class="" style="position:absolute;left:230.50px;top:351.30px;width:425.00px;height:0.00px;border-top:0.5px solid #e9e7e2;"></div><div class="t" style="left:232.00px;top:359px;font-size:7.5px;line-height:10.5px;color:#2b7a8c;">电量使用统计(大昌北厂区1号带电表)</div><div class="t" style="left:232.20px;top:371px;font-size:4.9px;line-height:6.86px;color:#aaa;">2018-12</div><div class="" style="position:absolute;left:430.00px;top:360.90px;width:7.80px;height:4.60px;background:#ccc;border-radius:0.8px;"></div><div class="t" style="left:440.00px;top:360px;font-size:4.1px;line-height:5.74px;color:#bbb;">使用量</div><svg style="position:absolute;left:571.00px;top:360.10px" width="7.00" height="7.00" viewBox="0 0 16 16"><path d="M2 14l1.500-4.500 8-8 3 3-8 8z" fill="#5a9fe0"/><path d="M1 15.500h6" stroke="#5a9fe0" stroke-width="1.200"/></svg><svg style="position:absolute;left:581.80px;top:360.10px" width="7.00" height="7.00" viewBox="0 0 16 16"><path d="M2 14l1.500-4.500 8-8 3 3-8 8z" fill="#d3d6da"/></svg><svg style="position:absolute;left:592.70px;top:360.10px" width="7.00" height="7.00" viewBox="0 0 16 16"><circle cx="8" cy="8" r="5.500" fill="none" stroke="#d9dcde" stroke-width="1.600"/><path d="M5 5l6 6" stroke="#d9dcde" stroke-width="1.400"/></svg><svg style="position:absolute;left:602.90px;top:360.10px" width="7.00" height="7.00" viewBox="0 0 16 16"><path d="M2.500 1h11v14h-11z" fill="#e6bd96"/><path d="M4.500 4h7M4.500 7h7M4.500 10h7" stroke="#fff" stroke-width="1.200"/></svg><svg style="position:absolute;left:613.80px;top:360.10px" width="7.00" height="7.00" viewBox="0 0 16 16"><path d="M1.500 1v13.500H15" fill="none" stroke="#5fb0d8" stroke-width="1.600"/><path d="M3 11l3.500-5 3 3L14 3" fill="none" stroke="#5fb0d8" stroke-width="1.600"/></svg><svg style="position:absolute;left:624.10px;top:360.10px" width="7.00" height="7.00" viewBox="0 0 16 16"><path d="M1.500 1v13.500H15" fill="none" stroke="#6fc070" stroke-width="1.600"/><path d="M4 6h2.500v8H4zM7.500 3H10v11H7.500zM11 8h2.500v6H11z" fill="#6fc070"/></svg><svg style="position:absolute;left:635.40px;top:360.10px" width="7.00" height="7.00" viewBox="0 0 16 16"><path d="M13.500 8A5.500 5.500 0 0 1 3.500 11M2.500 8A5.500 5.500 0 0 1 12.500 5" fill="none" stroke="#673aa0" stroke-width="2.600"/><path d="M15.500 2v5h-5zM0.500 14V9h5z" fill="#673aa0"/></svg><svg style="position:absolute;left:646.10px;top:360.10px" width="7.00" height="7.00" viewBox="0 0 16 16"><path d="M1.500 1.500h13v13h-13z" fill="none" stroke="#e3a377" stroke-width="1.600"/><path d="M4.500 1.500h7v5h-7z" fill="none" stroke="#e3a377" stroke-width="1.400"/><circle cx="8" cy="10.500" r="1.600" fill="#e3a377"/></svg><div class="" style="position:absolute;left:263.30px;top:383.00px;width:358.70px;height:1.00px;background:repeating-linear-gradient(90deg,#dcdcdc 0,#dcdcdc 1.3px,#fff 1.3px,#fff 2.6px);"></div><div class="t" style="left:260.20px;top:380px;font-size:5.0px;line-height:7.0px;color:#333;transform:translateX(-100%);">15.0</div><div class="" style="position:absolute;left:263.30px;top:399.00px;width:358.70px;height:1.00px;background:repeating-linear-gradient(90deg,#dcdcdc 0,#dcdcdc 1.3px,#fff 1.3px,#fff 2.6px);"></div><div class="t" style="left:260.20px;top:396px;font-size:5.0px;line-height:7.0px;color:#333;transform:translateX(-100%);">12.5</div><div class="" style="position:absolute;left:263.30px;top:414.00px;width:358.70px;height:1.00px;background:repeating-linear-gradient(90deg,#dcdcdc 0,#dcdcdc 1.3px,#fff 1.3px,#fff 2.6px);"></div><div class="t" style="left:260.20px;top:411px;font-size:5.0px;line-height:7.0px;color:#333;transform:translateX(-100%);">10.0</div><div class="" style="position:absolute;left:263.30px;top:430.00px;width:358.70px;height:1.00px;background:repeating-linear-gradient(90deg,#dcdcdc 0,#dcdcdc 1.3px,#fff 1.3px,#fff 2.6px);"></div><div class="t" style="left:260.20px;top:427px;font-size:5.0px;line-height:7.0px;color:#333;transform:translateX(-100%);">7.5</div><div class="" style="position:absolute;left:263.30px;top:446.00px;width:358.70px;height:1.00px;background:repeating-linear-gradient(90deg,#dcdcdc 0,#dcdcdc 1.3px,#fff 1.3px,#fff 2.6px);"></div><div class="t" style="left:260.20px;top:443px;font-size:5.0px;line-height:7.0px;color:#333;transform:translateX(-100%);">5.0</div><div class="" style="position:absolute;left:263.30px;top:462.00px;width:358.70px;height:1.00px;background:repeating-linear-gradient(90deg,#dcdcdc 0,#dcdcdc 1.3px,#fff 1.3px,#fff 2.6px);"></div><div class="t" style="left:260.20px;top:459px;font-size:5.0px;line-height:7.0px;color:#333;transform:translateX(-100%);">2.5</div><div class="t" style="left:260.20px;top:475px;font-size:5.0px;line-height:7.0px;color:#333;transform:translateX(-100%);">0</div><div class="" style="position:absolute;left:263.30px;top:477.40px;width:358.70px;height:0.00px;border-top:0.7px solid #6a9aa0;"></div><div class="" style="position:absolute;left:274.67px;top:477.70px;width:0.00px;height:1.60px;border-left:0.4px solid #6a9aa0;"></div><div class="t" style="left:269.09px;top:480px;font-size:4.9px;line-height:6.86px;color:#555;transform:translateX(-50%);">1日</div><div class="t" style="left:269.09px;top:467px;font-size:5.0px;line-height:7.0px;color:#c3cb4e;transform:translateX(-50%);">0</div><div class="" style="position:absolute;left:286.24px;top:477.70px;width:0.00px;height:1.60px;border-left:0.4px solid #6a9aa0;"></div><div class="t" style="left:280.66px;top:480px;font-size:4.9px;line-height:6.86px;color:#555;transform:translateX(-50%);">2日</div><div class="t" style="left:280.66px;top:467px;font-size:5.0px;line-height:7.0px;color:#c3cb4e;transform:translateX(-50%);">0</div><div class="" style="position:absolute;left:297.81px;top:477.70px;width:0.00px;height:1.60px;border-left:0.4px solid #6a9aa0;"></div><div class="t" style="left:292.23px;top:480px;font-size:4.9px;line-height:6.86px;color:#555;transform:translateX(-50%);">3日</div><div class="t" style="left:292.23px;top:467px;font-size:5.0px;line-height:7.0px;color:#c3cb4e;transform:translateX(-50%);">0</div><div class="" style="position:absolute;left:309.38px;top:477.70px;width:0.00px;height:1.60px;border-left:0.4px solid #6a9aa0;"></div><div class="t" style="left:303.80px;top:480px;font-size:4.9px;line-height:6.86px;color:#555;transform:translateX(-50%);">4日</div><div class="t" style="left:303.80px;top:467px;font-size:5.0px;line-height:7.0px;color:#c3cb4e;transform:translateX(-50%);">0</div><div class="" style="position:absolute;left:320.95px;top:477.70px;width:0.00px;height:1.60px;border-left:0.4px solid #6a9aa0;"></div><div class="t" style="left:315.37px;top:480px;font-size:4.9px;line-height:6.86px;color:#555;transform:translateX(-50%);">5日</div><div class="" style="position:absolute;left:310.72px;top:394.78px;width:9.30px;height:82.62px;background:#b5c334;"></div><div class="t" style="left:315.37px;top:385px;font-size:5.0px;line-height:7.0px;color:#b5c334;transform:translateX(-50%);">13.100</div><div class="" style="position:absolute;left:332.53px;top:477.70px;width:0.00px;height:1.60px;border-left:0.4px solid #6a9aa0;"></div><div class="t" style="left:326.94px;top:480px;font-size:4.9px;line-height:6.86px;color:#555;transform:translateX(-50%);">6日</div><div class="" style="position:absolute;left:322.29px;top:396.87px;width:9.30px;height:80.53px;background:#b5c334;"></div><div class="t" style="left:326.94px;top:387px;font-size:5.0px;line-height:7.0px;color:#b5c334;transform:translateX(-50%);">12.770</div><div class="" style="position:absolute;left:344.10px;top:477.70px;width:0.00px;height:1.60px;border-left:0.4px solid #6a9aa0;"></div><div class="t" style="left:338.51px;top:480px;font-size:4.9px;line-height:6.86px;color:#555;transform:translateX(-50%);">7日</div><div class="" style="position:absolute;left:333.86px;top:396.17px;width:9.30px;height:81.23px;background:#b5c334;"></div><div class="t" style="left:338.51px;top:386px;font-size:5.0px;line-height:7.0px;color:#b5c334;transform:translateX(-50%);">12.880</div><div class="" style="position:absolute;left:355.67px;top:477.70px;width:0.00px;height:1.60px;border-left:0.4px solid #6a9aa0;"></div><div class="t" style="left:350.08px;top:480px;font-size:4.9px;line-height:6.86px;color:#555;transform:translateX(-50%);">8日</div><div class="" style="position:absolute;left:345.43px;top:394.84px;width:9.30px;height:82.56px;background:#b5c334;"></div><div class="t" style="left:350.08px;top:385px;font-size:5.0px;line-height:7.0px;color:#b5c334;transform:translateX(-50%);">13.090</div><div class="" style="position:absolute;left:367.24px;top:477.70px;width:0.00px;height:1.60px;border-left:0.4px solid #6a9aa0;"></div><div class="t" style="left:361.65px;top:480px;font-size:4.9px;line-height:6.86px;color:#555;transform:translateX(-50%);">9日</div><div class="" style="position:absolute;left:357.00px;top:393.13px;width:9.30px;height:84.27px;background:#b5c334;"></div><div class="" style="position:absolute;left:378.81px;top:477.70px;width:0.00px;height:1.60px;border-left:0.4px solid #6a9aa0;"></div><div class="t" style="left:373.22px;top:480px;font-size:4.9px;line-height:6.86px;color:#555;transform:translateX(-50%);">10日</div><div class="" style="position:absolute;left:368.57px;top:395.54px;width:9.30px;height:81.86px;background:#b5c334;"></div><div class="t" style="left:373.22px;top:385px;font-size:5.0px;line-height:7.0px;color:#b5c334;transform:translateX(-50%);">12.980</div><div class="" style="position:absolute;left:390.38px;top:477.70px;width:0.00px;height:1.60px;border-left:0.4px solid #6a9aa0;"></div><div class="t" style="left:384.80px;top:480px;font-size:4.9px;line-height:6.86px;color:#555;transform:translateX(-50%);">11日</div><div class="t" style="left:384.80px;top:467px;font-size:5.0px;line-height:7.0px;color:#c3cb4e;transform:translateX(-50%);">0</div><div class="" style="position:absolute;left:401.95px;top:477.70px;width:0.00px;height:1.60px;border-left:0.4px solid #6a9aa0;"></div><div class="t" style="left:396.37px;top:480px;font-size:4.9px;line-height:6.86px;color:#555;transform:translateX(-50%);">12日</div><div class="t" style="left:396.37px;top:467px;font-size:5.0px;line-height:7.0px;color:#c3cb4e;transform:translateX(-50%);">0</div><div class="" style="position:absolute;left:413.52px;top:477.70px;width:0.00px;height:1.60px;border-left:0.4px solid #6a9aa0;"></div><div class="t" style="left:407.94px;top:480px;font-size:4.9px;line-height:6.86px;color:#555;transform:translateX(-50%);">13日</div><div class="t" style="left:407.94px;top:467px;font-size:5.0px;line-height:7.0px;color:#c3cb4e;transform:translateX(-50%);">0</div><div class="" style="position:absolute;left:425.09px;top:477.70px;width:0.00px;height:1.60px;border-left:0.4px solid #6a9aa0;"></div><div class="t" style="left:419.51px;top:480px;font-size:4.9px;line-height:6.86px;color:#555;transform:translateX(-50%);">14日</div><div class="t" style="left:419.51px;top:467px;font-size:5.0px;line-height:7.0px;color:#c3cb4e;transform:translateX(-50%);">0</div><div class="" style="position:absolute;left:436.66px;top:477.70px;width:0.00px;height:1.60px;border-left:0.4px solid #6a9aa0;"></div><div class="t" style="left:431.08px;top:480px;font-size:4.9px;line-height:6.86px;color:#555;transform:translateX(-50%);">15日</div><div class="t" style="left:431.08px;top:467px;font-size:5.0px;line-height:7.0px;color:#c3cb4e;transform:translateX(-50%);">0</div><div class="" style="position:absolute;left:448.24px;top:477.70px;width:0.00px;height:1.60px;border-left:0.4px solid #6a9aa0;"></div><div class="t" style="left:442.65px;top:480px;font-size:4.9px;line-height:6.86px;color:#555;transform:translateX(-50%);">16日</div><div class="t" style="left:442.65px;top:467px;font-size:5.0px;line-height:7.0px;color:#c3cb4e;transform:translateX(-50%);">0</div><div class="" style="position:absolute;left:459.81px;top:477.70px;width:0.00px;height:1.60px;border-left:0.4px solid #6a9aa0;"></div><div class="t" style="left:454.22px;top:480px;font-size:4.9px;line-height:6.86px;color:#555;transform:translateX(-50%);">17日</div><div class="t" style="left:454.22px;top:467px;font-size:5.0px;line-height:7.0px;color:#c3cb4e;transform:translateX(-50%);">0</div><div class="" style="position:absolute;left:471.38px;top:477.70px;width:0.00px;height:1.60px;border-left:0.4px solid #6a9aa0;"></div><div class="t" style="left:465.79px;top:480px;font-size:4.9px;line-height:6.86px;color:#555;transform:translateX(-50%);">18日</div><div class="t" style="left:465.79px;top:467px;font-size:5.0px;line-height:7.0px;color:#c3cb4e;transform:translateX(-50%);">0</div><div class="" style="position:absolute;left:482.95px;top:477.70px;width:0.00px;height:1.60px;border-left:0.4px solid #6a9aa0;"></div><div class="t" style="left:477.36px;top:480px;font-size:4.9px;line-height:6.86px;color:#555;transform:translateX(-50%);">19日</div><div class="t" style="left:477.36px;top:467px;font-size:5.0px;line-height:7.0px;color:#c3cb4e;transform:translateX(-50%);">0</div><div class="" style="position:absolute;left:494.52px;top:477.70px;width:0.00px;height:1.60px;border-left:0.4px solid #6a9aa0;"></div><div class="t" style="left:488.93px;top:480px;font-size:4.9px;line-height:6.86px;color:#555;transform:translateX(-50%);">20日</div><div class="t" style="left:488.93px;top:467px;font-size:5.0px;line-height:7.0px;color:#c3cb4e;transform:translateX(-50%);">0</div><div class="" style="position:absolute;left:506.09px;top:477.70px;width:0.00px;height:1.60px;border-left:0.4px solid #6a9aa0;"></div><div class="t" style="left:500.50px;top:480px;font-size:4.9px;line-height:6.86px;color:#555;transform:translateX(-50%);">21日</div><div class="t" style="left:500.50px;top:467px;font-size:5.0px;line-height:7.0px;color:#c3cb4e;transform:translateX(-50%);">0</div><div class="" style="position:absolute;left:517.66px;top:477.70px;width:0.00px;height:1.60px;border-left:0.4px solid #6a9aa0;"></div><div class="t" style="left:512.08px;top:480px;font-size:4.9px;line-height:6.86px;color:#555;transform:translateX(-50%);">22日</div><div class="t" style="left:512.08px;top:467px;font-size:5.0px;line-height:7.0px;color:#c3cb4e;transform:translateX(-50%);">0</div><div class="" style="position:absolute;left:529.23px;top:477.70px;width:0.00px;height:1.60px;border-left:0.4px solid #6a9aa0;"></div><div class="t" style="left:523.65px;top:480px;font-size:4.9px;line-height:6.86px;color:#555;transform:translateX(-50%);">23日</div><div class="t" style="left:523.65px;top:467px;font-size:5.0px;line-height:7.0px;color:#c3cb4e;transform:translateX(-50%);">0</div><div class="" style="position:absolute;left:540.80px;top:477.70px;width:0.00px;height:1.60px;border-left:0.4px solid #6a9aa0;"></div><div class="t" style="left:535.22px;top:480px;font-size:4.9px;line-height:6.86px;color:#555;transform:translateX(-50%);">24日</div><div class="t" style="left:535.22px;top:467px;font-size:5.0px;line-height:7.0px;color:#c3cb4e;transform:translateX(-50%);">0</div><div class="" style="position:absolute;left:552.37px;top:477.70px;width:0.00px;height:1.60px;border-left:0.4px solid #6a9aa0;"></div><div class="t" style="left:546.79px;top:480px;font-size:4.9px;line-height:6.86px;color:#555;transform:translateX(-50%);">25日</div><div class="t" style="left:546.79px;top:467px;font-size:5.0px;line-height:7.0px;color:#c3cb4e;transform:translateX(-50%);">0</div><div class="" style="position:absolute;left:563.95px;top:477.70px;width:0.00px;height:1.60px;border-left:0.4px solid #6a9aa0;"></div><div class="t" style="left:558.36px;top:480px;font-size:4.9px;line-height:6.86px;color:#555;transform:translateX(-50%);">26日</div><div class="t" style="left:558.36px;top:467px;font-size:5.0px;line-height:7.0px;color:#c3cb4e;transform:translateX(-50%);">0</div><div class="" style="position:absolute;left:575.52px;top:477.70px;width:0.00px;height:1.60px;border-left:0.4px solid #6a9aa0;"></div><div class="t" style="left:569.93px;top:480px;font-size:4.9px;line-height:6.86px;color:#555;transform:translateX(-50%);">27日</div><div class="t" style="left:569.93px;top:467px;font-size:5.0px;line-height:7.0px;color:#c3cb4e;transform:translateX(-50%);">0</div><div class="" style="position:absolute;left:587.09px;top:477.70px;width:0.00px;height:1.60px;border-left:0.4px solid #6a9aa0;"></div><div class="t" style="left:581.50px;top:480px;font-size:4.9px;line-height:6.86px;color:#555;transform:translateX(-50%);">28日</div><div class="t" style="left:581.50px;top:467px;font-size:5.0px;line-height:7.0px;color:#c3cb4e;transform:translateX(-50%);">0</div><div class="" style="position:absolute;left:598.66px;top:477.70px;width:0.00px;height:1.60px;border-left:0.4px solid #6a9aa0;"></div><div class="t" style="left:593.07px;top:480px;font-size:4.9px;line-height:6.86px;color:#555;transform:translateX(-50%);">29日</div><div class="t" style="left:593.07px;top:467px;font-size:5.0px;line-height:7.0px;color:#c3cb4e;transform:translateX(-50%);">0</div><div class="" style="position:absolute;left:610.23px;top:477.70px;width:0.00px;height:1.60px;border-left:0.4px solid #6a9aa0;"></div><div class="t" style="left:604.64px;top:480px;font-size:4.9px;line-height:6.86px;color:#555;transform:translateX(-50%);">30日</div><div class="t" style="left:604.64px;top:467px;font-size:5.0px;line-height:7.0px;color:#c3cb4e;transform:translateX(-50%);">0</div><div class="" style="position:absolute;left:621.80px;top:477.70px;width:0.00px;height:1.60px;border-left:0.4px solid #6a9aa0;"></div><div class="t" style="left:616.21px;top:480px;font-size:4.9px;line-height:6.86px;color:#555;transform:translateX(-50%);">31日</div><div class="t" style="left:616.21px;top:467px;font-size:5.0px;line-height:7.0px;color:#c3cb4e;transform:translateX(-50%);">0</div><div class="" style="position:absolute;left:263.10px;top:477.70px;width:0.00px;height:1.60px;border-left:0.4px solid #6a9aa0;"></div><svg style="position:absolute;left:351.25px;top:367.83px" width="20.80" height="25.30" viewBox="0 0 100 121"><path d="M50 121C47 96 8 82 0 50A50 50 0 1 1 100 50C92 82 53 96 50 121z" fill="#b5c334"/></svg><div class="t" style="left:361.65px;top:377px;font-size:5.0px;line-height:7.0px;color:#fff;transform:translateX(-50%);">13.360</div></div>
</div>
</body></html>
